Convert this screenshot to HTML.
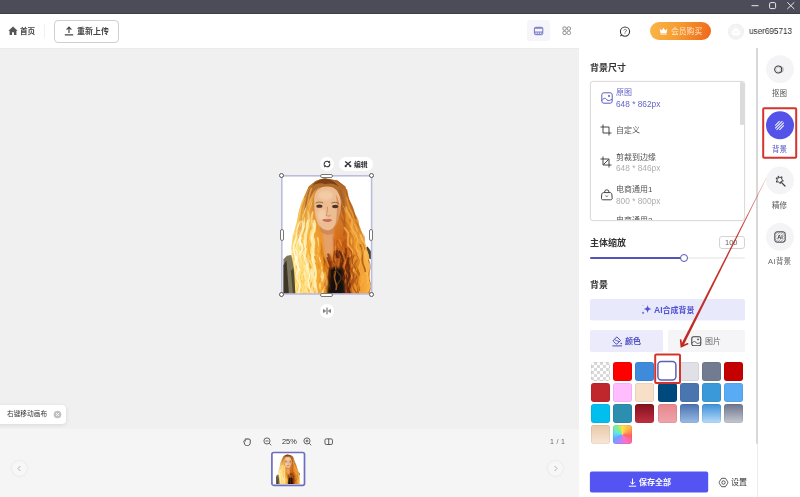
<!DOCTYPE html>
<html lang="zh-CN">
<head>
<meta charset="utf-8">
<title>背景</title>
<style>
*{box-sizing:border-box;margin:0;padding:0}
html,body{width:800px;height:497px;overflow:hidden;background:#fff}
body{position:relative;font-family:"Liberation Sans","Noto Sans CJK SC",sans-serif;font-size:8px;color:#333;line-height:1}
.abs{position:absolute}
.t{position:absolute;white-space:nowrap;line-height:1;will-change:transform}
#titlebar{left:0;top:0;width:800px;height:15px;background:linear-gradient(#4c4c58 0,#4c4c58 13px,#3d3d45 13px,#3d3d45 14px,#b9b9bd 14px)}
#header{left:0;top:14px;width:800px;height:34px;background:#fff}
#canvas{left:0;top:48px;width:579px;height:380px;background:#f0f0f0;border-top:1px solid #ebebeb}
#bottom{left:0;top:428px;width:579px;height:69px;background:#f5f5f5;border-top:1px solid #f1f1f1}
#panel{left:579px;top:48px;width:178px;height:449px;background:#fff}
#side{left:757px;top:48px;width:43px;height:449px;background:#fff;border-left:1px solid #ececec}
.b{font-weight:bold}
#sw i{position:absolute;display:block;width:18.6px;height:18.6px;border-radius:3px;box-shadow:inset 0 0 0 .6px rgba(0,0,0,.1)}
.hc{position:absolute;width:5.4px;height:5.4px;border-radius:50%;background:#fff;border:.9px solid #555}
.hh{position:absolute;width:12.6px;height:4px;border-radius:2px;background:#fff;border:.8px solid #777}
.hv{position:absolute;width:4px;height:12px;border-radius:2px;background:#fff;border:.8px solid #777}
.n{font-size:8.3px}
</style>
</head>
<body>
<svg width="0" height="0" style="position:absolute">
<defs>
<filter id="bl1" x="-20%" y="-20%" width="140%" height="140%"><feGaussianBlur stdDeviation="1.2"/></filter>
<filter id="bl2" x="-20%" y="-20%" width="140%" height="140%"><feGaussianBlur stdDeviation="2.2"/></filter>
<filter id="bl3" x="-20%" y="-20%" width="140%" height="140%"><feGaussianBlur stdDeviation="0.6"/></filter>
<linearGradient id="hairg" gradientUnits="userSpaceOnUse" x1="6" y1="0" x2="88" y2="0"><stop offset="0" stop-color="#ffe074"/><stop offset="0.2" stop-color="#ffc448"/><stop offset="0.4" stop-color="#f29a24"/><stop offset="0.55" stop-color="#da6e14"/><stop offset="0.7" stop-color="#ca5e12"/><stop offset="0.85" stop-color="#f09828"/><stop offset="1" stop-color="#f8b040"/></linearGradient>
<linearGradient id="hairv" gradientUnits="userSpaceOnUse" x1="0" y1="3" x2="0" y2="70"><stop offset="0" stop-color="#9a5a22" stop-opacity=".95"/><stop offset="0.25" stop-color="#c47a30" stop-opacity=".8"/><stop offset="0.7" stop-color="#d88a34" stop-opacity=".45"/><stop offset="1" stop-color="#e09038" stop-opacity="0"/></linearGradient>
<symbol id="photo" viewBox="0 0 90 119" preserveAspectRatio="none">
<rect width="90" height="119" fill="#fff"/>
<g filter="url(#bl3)">
<path d="M1.5 84L5 80.5L14 79L20 119H1.5Z" fill="#7c765c"/>
<path d="M1.5 90L4.5 85L7 119H1.5Z" fill="#3c3628"/>
<path d="M9 96L13 90L17 119H11Z" fill="#4e4836"/>
<path d="M90 76L86.5 71L82 74L85 82L90 84Z" fill="#4a4434"/>
<path d="M13.5 119.0L12.5 100.0L11.5 90.0L9.5 80.0L10.0 70.0L11.5 59.0L15.0 48.0L17.0 36.0L21.5 23.0L27.0 10.5L34.0 5.0L40.0 3.0L43.0 2.6L46.0 3.0L56.0 4.5L64.0 10.5L67.5 23.0L72.5 36.0L77.5 48.0L81.5 59.0L84.5 70.0L88.0 80.0L89.0 100.0L89.0 119.0Z" fill="url(#hairg)"/>
<path d="M13.5 119.0L12.5 100.0L11.5 90.0L9.5 80.0L10.0 70.0L11.5 59.0L15.0 48.0L17.0 36.0L21.5 23.0L27.0 10.5L34.0 5.0L40.0 3.0L43.0 2.6L46.0 3.0L56.0 4.5L64.0 10.5L67.5 23.0L72.5 36.0L77.5 48.0L81.5 59.0L84.5 70.0L88.0 80.0L89.0 100.0L89.0 119.0Z" fill="url(#hairv)"/>
</g>
<g filter="url(#bl3)" fill="none" stroke-linecap="round">
<path d="M45.8 77.2L46.4 80.3L45.8 83.3L44.7 86.4L44.7 89.4L45.9 92.5L47.7 95.5L48.7 98.6L48.1 101.6L46.5 104.7" stroke="#a95314" stroke-width="0.9" opacity="0.67"/>
<path d="M17.3 78.1L17.3 82.7L17.4 87.2L18.0 91.8L19.2 96.3L20.2 100.8L20.1 105.4L19.5 109.9L19.3 114.5L20.2 119.0" stroke="#edab44" stroke-width="1.0" opacity="0.56"/>
<path d="M49.3 69.4L49.0 71.1L48.8 72.7L48.9 74.3L49.1 76.0L49.7 77.6L50.4 79.2L51.2 80.9L51.9 82.5L52.6 84.1" stroke="#ab5012" stroke-width="1.5" opacity="0.81"/>
<path d="M47.6 95.7L49.2 98.2L49.1 100.8L47.6 103.4L45.9 106.0L45.8 108.6L47.4 111.2L49.4 113.8L50.1 116.4L49.0 119.0" stroke="#f09f38" stroke-width="1.9" opacity="0.71"/>
<path d="M65.9 38.9L65.6 44.5L68.8 50.1L71.0 55.8L69.7 61.4L73.0 67.1L74.9 72.7L73.6 78.3L77.2 84.0L77.6 89.6" stroke="#ef9727" stroke-width="1.5" opacity="0.94"/>
<path d="M42.0 88.1L42.7 90.4L43.1 92.8L43.2 95.1L43.1 97.5L42.8 99.8L42.4 102.2L42.2 104.5L42.3 106.9L42.7 109.2" stroke="#f29b24" stroke-width="1.0" opacity="0.65"/>
<path d="M32.7 8.6L29.9 13.6L27.7 18.6L25.6 23.6L24.8 28.6L23.7 33.6L22.0 38.6L21.4 43.7L21.6 48.7L20.2 53.7" stroke="#fce7ac" stroke-width="1.0" opacity="0.81"/>
<path d="M22.4 42.0L22.5 44.8L22.8 47.6L22.5 50.3L21.7 53.1L20.5 55.8L19.3 58.6L18.6 61.3L18.5 64.1L18.8 66.9" stroke="#ffefb6" stroke-width="1.1" opacity="0.71"/>
<path d="M71.0 62.6L72.9 64.9L74.7 67.2L75.3 69.5L74.9 71.8L73.9 74.2L73.6 76.5L74.5 78.8L76.5 81.1L78.3 83.5" stroke="#f09929" stroke-width="1.3" opacity="0.67"/>
<path d="M29.7 11.4L27.9 15.5L25.7 19.7L24.4 23.9L23.8 28.1L22.5 32.3L20.6 36.5L20.0 40.7L20.3 44.9L19.9 49.0" stroke="#e59a39" stroke-width="1.5" opacity="0.78"/>
<path d="M60.8 20.0L62.0 22.5L62.9 25.0L63.0 27.6L62.8 30.1L63.0 32.6L64.1 35.1L66.0 37.7L67.7 40.2L68.5 42.7" stroke="#eeae53" stroke-width="2.1" opacity="0.63"/>
<path d="M83.2 84.9L85.1 88.7L86.0 92.5L84.4 96.2L83.9 100.0L86.0 103.8L86.5 107.6L84.3 111.4L83.9 115.2L86.2 119.0" stroke="#f5a838" stroke-width="1.1" opacity="0.83"/>
<path d="M28.9 79.4L30.7 83.7L32.0 87.9L31.7 92.2L30.8 96.4L31.3 100.6L32.8 104.9L33.8 109.1L33.0 113.4L31.7 117.6" stroke="#fdd885" stroke-width="1.6" opacity="0.89"/>
<path d="M55.3 68.1L56.1 69.7L56.8 71.3L57.2 72.9L57.3 74.5L57.0 76.1L56.7 77.7L56.6 79.3L56.9 80.9L57.5 82.5" stroke="#e7943c" stroke-width="1.6" opacity="0.60"/>
<path d="M38.2 85.7L40.5 89.4L41.3 93.1L40.0 96.8L38.5 100.5L38.9 104.2L41.0 107.9L42.6 111.6L41.8 115.3L39.6 119.0" stroke="#f9c56d" stroke-width="0.8" opacity="0.91"/>
<path d="M63.9 92.3L64.4 94.4L65.4 96.4L66.5 98.4L67.5 100.4L68.0 102.4L67.9 104.4L67.2 106.5L66.1 108.5L65.1 110.5" stroke="#efab52" stroke-width="0.9" opacity="0.77"/>
<path d="M67.9 86.5L66.8 90.1L66.7 93.8L68.3 97.4L70.2 101.0L71.0 104.6L69.9 108.2L68.0 111.8L66.9 115.4L67.7 119.0" stroke="#a54c13" stroke-width="2.1" opacity="0.90"/>
<path d="M40.5 76.4L43.1 81.1L44.3 85.8L42.7 90.6L42.8 95.3L45.6 100.0L45.8 104.8L43.3 109.5L43.8 114.3L46.7 119.0" stroke="#b35e17" stroke-width="0.9" opacity="0.81"/>
<path d="M87.3 84.6L88.8 88.5L89.3 92.3L88.2 96.1L87.2 99.9L87.6 103.7L89.2 107.5L90.0 111.4L88.9 115.2L87.2 119.0" stroke="#aa5b1d" stroke-width="0.9" opacity="0.85"/>
<path d="M12.9 58.8L12.8 62.6L13.3 66.4L13.0 70.2L11.9 74.0L11.0 77.8L11.7 81.6L13.5 85.4L14.6 89.1L14.0 92.9" stroke="#e9a440" stroke-width="1.2" opacity="0.55"/>
<path d="M32.8 65.9L33.2 68.6L33.2 71.4L32.9 74.1L32.5 76.8L32.3 79.5L32.8 82.2L33.8 84.9L34.9 87.7L35.6 90.4" stroke="#e89933" stroke-width="1.3" opacity="0.82"/>
<path d="M29.0 43.0L27.2 48.0L25.0 53.1L26.2 58.1L26.5 63.2L23.6 68.2L23.8 73.3L26.8 78.3L26.2 83.4L24.4 88.4" stroke="#f2ad3e" stroke-width="1.0" opacity="0.75"/>
<path d="M77.1 81.8L74.4 85.9L74.2 90.0L77.7 94.2L78.2 98.3L74.8 102.4L74.9 106.6L78.6 110.7L78.3 114.9L74.4 119.0" stroke="#c36c1c" stroke-width="1.1" opacity="0.72"/>
<path d="M60.9 90.2L60.9 93.4L59.3 96.6L59.0 99.8L60.7 103.0L62.1 106.2L60.9 109.4L59.1 112.6L59.7 115.8L61.9 119.0" stroke="#d26613" stroke-width="0.9" opacity="0.83"/>
<path d="M50.6 61.7L51.0 63.6L51.6 65.6L52.4 67.5L53.2 69.5L53.9 71.4L54.3 73.4L54.4 75.3L54.1 77.3L53.8 79.2" stroke="#e68e34" stroke-width="0.9" opacity="0.80"/>
<path d="M41.7 61.5L43.8 65.9L44.9 70.4L43.9 74.9L42.7 79.3L44.2 83.8L47.1 88.3L47.7 92.7L45.7 97.2L44.5 101.7" stroke="#f5ab46" stroke-width="1.1" opacity="0.55"/>
<path d="M44.6 69.3L44.5 71.9L45.1 74.5L46.0 77.2L47.1 79.8L47.9 82.4L48.1 85.0L47.7 87.7L47.3 90.3L47.0 92.9" stroke="#af5715" stroke-width="1.9" opacity="0.71"/>
<path d="M74.4 87.1L73.8 89.4L72.0 91.6L70.6 93.9L70.8 96.2L72.6 98.5L74.7 100.7L75.5 103.0L74.6 105.3L72.4 107.5" stroke="#ad5616" stroke-width="2.1" opacity="0.70"/>
<path d="M54.3 84.6L53.0 88.4L54.1 92.2L56.9 96.1L58.4 99.9L56.9 103.7L54.3 107.5L53.9 111.4L56.4 115.2L59.0 119.0" stroke="#efa549" stroke-width="1.9" opacity="0.81"/>
<path d="M68.6 95.1L68.6 97.8L67.4 100.4L66.1 103.1L65.8 105.7L67.0 108.4L68.6 111.0L69.4 113.7L68.7 116.3L67.1 119.0" stroke="#ce6515" stroke-width="2.0" opacity="0.69"/>
<path d="M21.0 43.9L18.9 48.0L19.2 52.0L19.4 56.1L16.6 60.2L15.5 64.2L17.3 68.3L17.2 72.3L14.6 76.4L15.4 80.5" stroke="#ffd462" stroke-width="0.9" opacity="0.87"/>
<path d="M26.7 34.1L26.8 39.1L26.4 44.0L25.1 49.0L24.3 54.0L24.2 59.0L23.6 64.0L22.3 68.9L22.7 73.9L23.8 78.9" stroke="#fdc44d" stroke-width="2.0" opacity="0.83"/>
<path d="M73.8 48.7L76.2 54.3L78.5 59.9L79.1 65.5L80.3 71.1L83.2 76.7L84.2 82.3L83.5 87.9L84.5 93.5L85.6 99.1" stroke="#fbbd58" stroke-width="1.7" opacity="0.76"/>
<path d="M70.4 55.0L71.1 58.1L71.1 61.2L71.0 64.4L71.3 67.5L72.4 70.7L74.1 73.8L75.8 76.9L76.8 80.1L76.5 83.2" stroke="#f9b954" stroke-width="2.2" opacity="0.76"/>
<path d="M54.2 78.5L55.2 81.9L55.6 85.2L55.4 88.5L55.1 91.9L55.4 95.2L56.3 98.6L57.1 101.9L57.0 105.2L56.3 108.6" stroke="#a34911" stroke-width="1.6" opacity="0.75"/>
<path d="M64.6 75.4L64.3 79.8L62.3 84.2L63.4 88.5L66.6 92.9L66.9 97.3L64.0 101.7L63.3 106.1L66.5 110.5L68.1 114.8" stroke="#e4933e" stroke-width="1.9" opacity="0.91"/>
<path d="M47.8 82.5L47.1 86.6L47.9 90.6L49.4 94.7L48.9 98.7L48.1 102.8L49.4 106.8L50.2 110.9L48.8 114.9L48.7 119.0" stroke="#f0a03c" stroke-width="1.8" opacity="0.68"/>
<path d="M38.2 86.4L37.5 88.3L37.4 90.3L37.9 92.2L39.0 94.1L40.3 96.0L41.1 97.9L41.1 99.8L40.3 101.7L39.1 103.6" stroke="#bf6d1d" stroke-width="1.3" opacity="0.72"/>
<path d="M50.7 83.0L52.6 86.4L53.8 89.8L53.2 93.3L51.9 96.7L51.4 100.2L52.3 103.6L54.1 107.0L55.0 110.5L54.1 113.9" stroke="#dd7416" stroke-width="1.1" opacity="0.85"/>
<path d="M74.6 86.8L74.9 89.9L73.9 93.1L73.1 96.2L73.8 99.4L75.3 102.5L75.8 105.7L74.8 108.9L73.4 112.0L73.6 115.2" stroke="#e68922" stroke-width="2.0" opacity="0.60"/>
<path d="M27.4 70.4L27.3 73.4L27.9 76.3L28.7 79.2L29.4 82.2L29.5 85.1L29.3 88.0L29.2 91.0L29.7 93.9L30.8 96.9" stroke="#fcbc41" stroke-width="1.0" opacity="0.71"/>
<path d="M63.9 84.7L62.1 88.6L62.8 92.4L65.7 96.2L67.3 100.0L65.5 103.8L62.8 107.6L63.1 111.4L66.1 115.2L68.0 119.0" stroke="#cc6012" stroke-width="1.5" opacity="0.82"/>
<path d="M34.8 9.5L33.8 11.9L33.1 14.2L32.3 16.6L31.4 18.9L30.5 21.3L29.8 23.6L29.4 26.0L29.1 28.3L28.9 30.6" stroke="#d89039" stroke-width="1.1" opacity="0.63"/>
<path d="M76.8 94.9L77.4 97.6L77.6 100.3L77.3 102.9L76.7 105.6L76.2 108.3L75.9 111.0L76.2 113.6L76.7 116.3L77.4 119.0" stroke="#ab5717" stroke-width="1.3" opacity="0.74"/>
<path d="M48.4 61.5L46.9 65.1L46.8 68.7L48.9 72.3L51.1 76.0L51.0 79.6L49.3 83.2L48.8 86.8L50.8 90.5L53.3 94.1" stroke="#e07818" stroke-width="1.4" opacity="0.63"/>
<path d="M26.1 50.6L25.8 52.6L25.1 54.6L24.0 56.5L22.7 58.5L21.7 60.5L21.2 62.5L21.2 64.5L21.7 66.5L22.6 68.5" stroke="#fec850" stroke-width="1.7" opacity="0.71"/>
<path d="M55.5 89.0L56.4 91.3L57.9 93.6L59.4 95.9L60.5 98.3L60.6 100.6L59.6 102.9L58.2 105.2L56.8 107.5L56.1 109.8" stroke="#d56913" stroke-width="1.4" opacity="0.91"/>
<path d="M74.5 67.5L74.6 72.4L77.8 77.3L80.5 82.2L79.5 87.1L77.6 92.0L78.6 96.9L81.5 101.8L81.4 106.7L78.6 111.6" stroke="#f8b249" stroke-width="1.5" opacity="0.55"/>
<path d="M36.0 62.3L37.0 66.6L37.3 71.0L36.8 75.3L36.5 79.7L37.7 84.0L39.5 88.3L39.9 92.7L39.0 97.0L38.7 101.4" stroke="#fce09e" stroke-width="1.6" opacity="0.76"/>
<path d="M40.1 95.8L40.7 98.4L42.0 100.9L43.4 103.5L44.4 106.1L44.6 108.7L43.9 111.3L42.6 113.8L41.3 116.4L40.7 119.0" stroke="#fbdc99" stroke-width="1.8" opacity="0.65"/>
<path d="M39.7 74.1L39.6 75.9L39.9 77.8L40.5 79.6L41.3 81.4L42.1 83.3L42.7 85.1L43.0 86.9L42.9 88.8L42.6 90.6" stroke="#a24f14" stroke-width="1.6" opacity="0.95"/>
<path d="M59.1 78.1L60.8 80.4L61.3 82.6L60.7 84.8L59.5 87.0L58.9 89.3L59.6 91.5L61.2 93.7L62.6 95.9L62.7 98.2" stroke="#d16513" stroke-width="1.0" opacity="0.74"/>
<path d="M25.1 49.0L24.0 53.3L23.8 57.6L23.7 61.9L22.8 66.2L22.0 70.5L22.6 74.8L23.4 79.1L23.6 83.4L23.5 87.7" stroke="#eea83e" stroke-width="1.3" opacity="0.66"/>
<path d="M61.6 85.9L62.3 88.4L62.6 90.8L62.2 93.2L61.8 95.6L61.9 98.1L62.5 100.5L63.2 102.9L63.4 105.3L62.9 107.8" stroke="#eca24a" stroke-width="1.3" opacity="0.91"/>
<path d="M53.2 7.7L54.3 13.4L55.0 19.2L57.1 24.9L58.2 30.7L57.7 36.4L59.3 42.2L62.9 48.0L63.9 53.7L62.7 59.5" stroke="#ac581c" stroke-width="2.2" opacity="0.65"/>
<path d="M51.8 90.0L53.2 93.2L53.7 96.4L53.2 99.7L51.9 102.9L51.1 106.1L51.5 109.3L52.9 112.6L54.3 115.8L54.7 119.0" stroke="#c16114" stroke-width="1.7" opacity="0.73"/>
<path d="M36.3 7.8L34.2 11.8L33.3 15.8L32.1 19.8L30.5 23.7L29.5 27.7L29.0 31.7L28.7 35.7L28.6 39.6L27.9 43.6" stroke="#e59d3d" stroke-width="1.6" opacity="0.72"/>
<path d="M63.2 52.3L67.3 58.0L66.5 63.8L66.6 69.6L71.3 75.4L69.8 81.2L70.0 87.0L73.9 92.8L70.5 98.6L71.2 104.4" stroke="#f4b152" stroke-width="1.9" opacity="0.80"/>
<path d="M36.3 80.7L37.3 84.0L39.7 87.3L40.8 90.6L39.5 93.9L38.0 97.2L38.9 100.5L41.3 103.8L42.0 107.1L40.2 110.4" stroke="#feedb7" stroke-width="2.1" opacity="0.90"/>
<path d="M31.0 8.6L28.3 11.6L26.6 14.6L25.0 17.6L24.1 20.6L23.6 23.5L22.8 26.5L21.1 29.5L19.6 32.5L19.0 35.5" stroke="#df993d" stroke-width="0.9" opacity="0.82"/>
<path d="M49.3 61.6L49.7 64.9L51.2 68.3L52.5 71.7L52.5 75.1L51.6 78.4L51.7 81.8L53.3 85.2L55.0 88.6L55.1 92.0" stroke="#da6e14" stroke-width="2.0" opacity="0.58"/>
<path d="M19.8 78.1L17.9 82.4L18.8 86.8L22.1 91.1L22.9 95.5L20.7 99.8L19.9 104.2L22.7 108.5L24.5 112.9L22.3 117.2" stroke="#ffeeb3" stroke-width="1.3" opacity="0.81"/>
<path d="M69.9 33.2L71.9 37.3L74.9 41.3L76.7 45.4L76.8 49.4L77.5 53.5L80.3 57.5L82.9 61.6L83.1 65.6L82.3 69.7" stroke="#cb7d2b" stroke-width="2.0" opacity="0.58"/>
<path d="M17.1 55.4L17.2 59.2L18.1 63.0L17.8 66.8L16.1 70.6L14.7 74.4L14.8 78.2L16.7 82.0L18.7 85.8L19.1 89.6" stroke="#ffe596" stroke-width="1.7" opacity="0.58"/>
<path d="M33.0 70.3L33.9 74.9L32.9 79.5L33.1 84.1L35.3 88.7L36.1 93.4L34.9 98.0L34.9 102.6L36.8 107.2L37.1 111.8" stroke="#f8ae35" stroke-width="1.3" opacity="0.60"/>
<path d="M67.6 93.7L67.8 96.5L66.8 99.3L65.5 102.1L65.4 104.9L66.7 107.8L68.2 110.6L68.5 113.4L67.4 116.2L65.9 119.0" stroke="#e3933d" stroke-width="2.1" opacity="0.91"/>
<path d="M31.2 36.6L30.3 39.9L29.9 43.3L30.3 46.6L30.8 50.0L30.5 53.3L29.2 56.6L28.0 60.0L28.0 63.3L28.9 66.7" stroke="#fce19d" stroke-width="1.9" opacity="0.77"/>
<path d="M69.8 55.2L71.2 57.8L71.3 60.5L70.5 63.1L70.0 65.7L70.7 68.3L72.6 70.9L74.7 73.5L75.7 76.2L75.3 78.8" stroke="#f6b04a" stroke-width="1.6" opacity="0.78"/>
<path d="M80.6 63.4L81.1 68.5L82.7 73.5L85.3 78.6L86.2 83.6L85.6 88.6L85.4 93.7L86.4 98.7L87.3 103.8L86.6 108.8" stroke="#f9b64c" stroke-width="1.8" opacity="0.91"/>
<path d="M18.5 61.8L17.2 64.3L15.7 66.8L14.8 69.3L15.4 71.8L16.8 74.3L17.8 76.8L17.6 79.3L16.5 81.8L15.5 84.3" stroke="#ffefb2" stroke-width="1.5" opacity="0.86"/>
<path d="M39.8 84.4L40.1 87.4L41.5 90.4L43.1 93.4L44.0 96.4L43.8 99.4L42.5 102.5L41.4 105.5L41.3 108.5L42.4 111.5" stroke="#f29b25" stroke-width="1.4" opacity="0.88"/>
<path d="M63.6 82.2L62.2 86.3L61.0 90.4L61.6 94.5L63.9 98.6L65.7 102.6L65.2 106.7L62.9 110.8L61.4 114.9L62.3 119.0" stroke="#a94c11" stroke-width="1.8" opacity="0.87"/>
<path d="M44.0 86.8L43.0 90.4L43.3 94.0L45.3 97.5L46.1 101.1L44.7 104.7L43.6 108.3L44.7 111.8L46.6 115.4L46.3 119.0" stroke="#c36c1a" stroke-width="2.2" opacity="0.57"/>
<path d="M34.3 88.0L34.9 90.1L35.6 92.2L36.2 94.2L36.6 96.3L36.6 98.4L36.4 100.5L35.9 102.6L35.6 104.6L35.5 106.7" stroke="#f8ad34" stroke-width="0.9" opacity="0.59"/>
<path d="M29.9 23.2L30.1 26.0L29.6 28.9L28.2 31.7L26.7 34.5L26.3 37.4L27.1 40.2L27.8 43.1L27.6 45.9L26.2 48.8" stroke="#f9d78e" stroke-width="1.0" opacity="0.85"/>
<path d="M35.7 77.7L35.0 80.0L33.9 82.3L32.9 84.6L33.1 87.0L34.5 89.3L36.4 91.6L37.9 93.9L38.1 96.2L36.9 98.6" stroke="#e79832" stroke-width="1.5" opacity="0.64"/>
<path d="M16.6 90.9L16.8 94.0L15.9 97.2L15.1 100.3L15.2 103.4L16.6 106.5L18.0 109.6L18.3 112.8L17.3 115.9L16.1 119.0" stroke="#fff3be" stroke-width="1.7" opacity="0.65"/>
<path d="M16.0 46.9L16.2 50.2L15.1 53.6L12.8 57.0L10.7 60.3L10.3 63.7L11.3 67.1L12.3 70.5L12.1 73.8L10.4 77.2" stroke="#ffe99b" stroke-width="1.3" opacity="0.65"/>
<path d="M68.9 50.9L72.1 55.3L74.1 59.7L73.2 64.1L72.5 68.5L75.3 72.9L78.9 77.3L78.9 81.7L76.4 86.1L76.7 90.5" stroke="#fab954" stroke-width="0.8" opacity="0.88"/>
<path d="M74.9 79.3L76.0 81.5L77.0 83.8L77.4 86.0L77.0 88.3L76.2 90.6L75.7 92.8L76.1 95.1L77.2 97.3L78.2 99.6" stroke="#ba651b" stroke-width="2.1" opacity="0.78"/>
<path d="M63.0 31.2L65.4 36.2L65.9 41.1L67.5 46.1L70.3 51.1L70.4 56.1L71.3 61.1L74.1 66.1L73.9 71.1L74.7 76.0" stroke="#e9942a" stroke-width="1.1" opacity="0.77"/>
<path d="M49.8 71.8L50.5 74.3L50.8 76.8L50.8 79.2L50.5 81.7L50.6 84.2L51.0 86.6L51.8 89.1L52.6 91.6L53.1 94.0" stroke="#de7517" stroke-width="1.3" opacity="0.82"/>
<path d="M21.2 39.6L21.4 43.3L22.5 47.0L22.5 50.7L20.6 54.5L17.9 58.2L17.0 61.9L18.1 65.6L19.5 69.3L19.5 73.1" stroke="#fee59b" stroke-width="1.8" opacity="0.64"/>
<path d="M56.1 95.5L56.5 98.1L56.1 100.7L55.2 103.3L54.7 105.9L55.1 108.6L56.2 111.2L57.1 113.8L57.0 116.4L56.2 119.0" stroke="#ad5012" stroke-width="1.2" opacity="0.68"/>
<path d="M39.5 64.9L38.9 67.8L38.5 70.7L39.1 73.6L40.2 76.6L41.1 79.5L41.2 82.4L40.7 85.3L40.5 88.3L41.2 91.2" stroke="#f39c25" stroke-width="1.6" opacity="0.84"/>
<path d="M35.0 79.7L35.8 82.0L36.7 84.3L37.3 86.6L37.7 88.9L37.5 91.2L37.1 93.5L36.8 95.8L36.8 98.1L37.2 100.3" stroke="#f6a830" stroke-width="1.1" opacity="0.71"/>
<path d="M69.2 58.0L70.3 60.3L71.4 62.6L72.1 64.9L72.1 67.1L71.8 69.4L72.0 71.7L72.8 74.0L74.2 76.3L75.6 78.5" stroke="#cc751f" stroke-width="2.1" opacity="0.72"/>
<path d="M47.1 63.1L49.6 68.0L48.5 72.9L47.5 77.8L50.6 82.7L52.3 87.6L49.8 92.5L50.0 97.4L53.6 102.3L52.7 107.2" stroke="#c66616" stroke-width="1.4" opacity="0.83"/>
<path d="M86.6 76.3L85.9 80.8L85.5 85.3L88.0 89.7L88.8 94.2L86.6 98.7L86.1 103.2L88.8 107.7L89.2 112.2L86.4 116.7" stroke="#fbbe58" stroke-width="0.9" opacity="0.70"/>
<path d="M47.8 76.2L48.4 80.9L50.9 85.7L52.4 90.5L51.1 95.2L49.7 100.0L50.9 104.7L53.3 109.5L53.3 114.2L50.9 119.0" stroke="#e17a18" stroke-width="1.6" opacity="0.69"/>
<path d="M48.9 95.3L48.8 98.0L50.4 100.6L52.3 103.2L52.9 105.9L51.7 108.5L49.7 111.1L49.0 113.7L50.2 116.4L52.5 119.0" stroke="#e27d19" stroke-width="1.7" opacity="0.63"/>
<path d="M25.0 25.7L22.8 29.9L21.2 34.0L21.1 38.2L21.7 42.3L21.5 46.5L19.6 50.7L17.3 54.8L16.2 59.0L17.1 63.2" stroke="#eca944" stroke-width="1.0" opacity="0.94"/>
<path d="M20.1 86.9L20.8 90.5L23.0 94.0L24.3 97.6L23.0 101.2L21.4 104.7L22.3 108.3L24.7 111.9L25.3 115.4L23.3 119.0" stroke="#ffcd56" stroke-width="2.2" opacity="0.88"/>
<path d="M54.1 71.0L55.3 75.2L57.2 79.5L58.1 83.7L57.8 87.9L57.1 92.1L57.4 96.3L58.8 100.5L59.8 104.7L59.4 108.9" stroke="#eb9c42" stroke-width="0.9" opacity="0.56"/>
<path d="M24.1 94.6L25.4 97.3L27.1 100.0L28.2 102.7L28.2 105.4L27.1 108.2L25.7 110.9L24.8 113.6L25.3 116.3L26.8 119.0" stroke="#ffc74c" stroke-width="1.3" opacity="0.79"/>
<path d="M52.3 4.5L53.9 7.2L55.8 9.9L56.6 12.6L57.4 15.3L58.2 18.0L58.8 20.7L58.9 23.5L58.9 26.2L59.2 28.9" stroke="#a6591f" stroke-width="1.5" opacity="0.66"/>
<path d="M51.7 62.3L52.6 65.9L52.8 69.4L52.6 72.9L52.7 76.5L53.6 80.0L54.9 83.5L55.8 87.1L55.7 90.6L55.0 94.1" stroke="#b25312" stroke-width="1.7" opacity="0.83"/>
<path d="M67.6 72.8L70.1 76.6L70.6 80.4L68.9 84.2L67.5 88.0L68.3 91.8L70.8 95.6L72.8 99.4L72.4 103.3L69.9 107.1" stroke="#b15615" stroke-width="1.6" opacity="0.91"/>
<path d="M51.5 92.5L51.7 95.0L52.2 97.5L52.9 100.0L53.4 102.5L53.7 105.0L53.6 107.5L53.2 110.0L52.7 112.4L52.3 114.9" stroke="#de7517" stroke-width="1.6" opacity="0.85"/>
<path d="M31.6 65.3L32.3 68.2L33.7 71.1L34.1 73.9L33.1 76.8L32.1 79.7L33.0 82.6L35.0 85.4L36.1 88.3L35.3 91.2" stroke="#ec9e33" stroke-width="1.1" opacity="0.67"/>
<path d="M40.8 92.7L42.6 95.6L44.3 98.6L44.5 101.5L43.1 104.4L41.4 107.3L41.1 110.2L42.6 113.2L44.7 116.1L45.5 119.0" stroke="#f29b25" stroke-width="1.1" opacity="0.85"/>
<path d="M54.4 86.8L53.5 89.2L53.3 91.5L54.1 93.8L55.6 96.1L57.2 98.4L58.0 100.7L57.6 103.0L56.4 105.4L54.8 107.7" stroke="#d86c14" stroke-width="0.8" opacity="0.65"/>
<path d="M33.2 33.1L32.5 35.3L32.7 37.5L33.5 39.7L34.4 41.8L35.0 44.0L34.9 46.2L34.1 48.4L32.8 50.5L31.8 52.7" stroke="#e79b36" stroke-width="0.9" opacity="0.56"/>
<path d="M64.6 31.6L65.6 35.4L68.3 39.3L70.8 43.1L71.3 47.0L70.8 50.9L71.9 54.7L74.8 58.6L76.9 62.5L76.6 66.3" stroke="#f0ab49" stroke-width="2.1" opacity="0.91"/>
<path d="M23.8 80.8L24.3 84.1L25.8 87.4L27.5 90.7L28.4 94.0L28.1 97.3L27.1 100.6L26.2 103.9L26.3 107.2L27.6 110.5" stroke="#ffc549" stroke-width="1.1" opacity="0.80"/>
<path d="M25.1 84.7L25.0 86.8L25.3 88.9L26.0 91.1L26.8 93.2L27.5 95.3L27.8 97.4L27.6 99.6L27.1 101.7L26.6 103.8" stroke="#ffc54a" stroke-width="2.0" opacity="0.84"/>
<path d="M21.1 67.6L20.3 73.1L18.9 78.7L21.9 84.3L22.1 89.8L21.0 95.4L24.0 100.9L23.4 106.5L21.8 112.1L24.9 117.6" stroke="#ffecac" stroke-width="1.1" opacity="0.62"/>
<path d="M28.0 64.7L26.6 69.7L27.1 74.7L28.7 79.6L29.8 84.6L29.2 89.6L28.7 94.6L30.3 99.6L32.0 104.6L31.6 109.6" stroke="#f2ab3b" stroke-width="1.2" opacity="0.92"/>
<path d="M57.9 64.1L59.7 68.6L61.5 73.1L61.5 77.5L60.8 82.0L61.9 86.4L64.1 90.9L64.2 95.4L62.6 99.8L62.3 104.3" stroke="#e89b44" stroke-width="1.2" opacity="0.65"/>
<path d="M56.4 11.1L57.5 14.1L58.4 17.2L58.5 20.2L58.0 23.2L58.3 26.3L59.7 29.3L61.4 32.3L62.4 35.4L62.4 38.4" stroke="#b26222" stroke-width="2.1" opacity="0.95"/>
<path d="M18.2 45.8L16.0 50.7L14.0 55.5L14.0 60.3L14.1 65.2L12.2 70.0L11.3 74.9L12.5 79.7L14.2 84.5L13.6 89.4" stroke="#ffedab" stroke-width="1.7" opacity="0.69"/>
<path d="M60.8 75.7L60.2 79.6L60.2 83.5L61.8 87.5L63.6 91.4L63.7 95.3L62.4 99.3L61.3 103.2L62.2 107.1L64.1 111.0" stroke="#9b4311" stroke-width="1.0" opacity="0.86"/>
<path d="M23.3 59.4L22.3 62.3L21.6 65.1L21.5 68.0L22.1 70.8L23.1 73.6L23.6 76.5L23.4 79.3L22.9 82.2L22.5 85.0" stroke="#ffc950" stroke-width="1.1" opacity="0.75"/>
<path d="M27.9 56.8L27.1 60.7L26.4 64.6L26.0 68.4L26.5 72.3L27.2 76.1L27.4 80.0L27.5 83.9L27.5 87.7L28.2 91.6" stroke="#e99e37" stroke-width="1.1" opacity="0.61"/>
<path d="M16.0 49.0L14.0 52.7L12.6 56.3L12.4 59.9L12.9 63.5L12.8 67.1L11.7 70.7L10.4 74.3L9.8 77.9L10.7 81.6" stroke="#fff2bb" stroke-width="1.6" opacity="0.77"/>
<path d="M58.5 25.1L58.6 27.6L59.0 30.1L59.8 32.6L60.9 35.1L62.0 37.6L62.7 40.1L63.0 42.6L63.1 45.1L63.6 47.6" stroke="#ac591b" stroke-width="1.2" opacity="0.79"/>
<path d="M15.9 79.1L16.9 81.7L18.0 84.3L18.8 86.9L18.9 89.5L18.4 92.1L17.9 94.7L17.9 97.3L18.5 99.9L19.4 102.5" stroke="#ffd461" stroke-width="1.9" opacity="0.57"/>
<path d="M42.0 94.8L42.1 96.4L42.5 98.1L43.1 99.8L43.8 101.5L44.5 103.1L45.2 104.8L45.7 106.5L45.8 108.1L45.7 109.8" stroke="#f7b147" stroke-width="1.8" opacity="0.57"/>
<path d="M28.6 85.6L30.0 88.1L31.2 90.6L31.6 93.0L31.1 95.5L30.2 98.0L29.6 100.5L29.8 103.0L30.8 105.4L32.1 107.9" stroke="#fdd479" stroke-width="2.2" opacity="0.86"/>
<path d="M55.4 24.3L55.4 27.2L55.9 30.2L57.1 33.1L58.4 36.0L59.4 38.9L59.6 41.8L59.4 44.7L59.8 47.6L60.8 50.5" stroke="#d17827" stroke-width="1.3" opacity="0.68"/>
<path d="M79.7 59.7L79.9 61.8L80.8 63.9L82.2 66.0L83.5 68.0L84.2 70.1L84.3 72.2L84.0 74.3L84.1 76.4L85.1 78.5" stroke="#fcbf59" stroke-width="2.0" opacity="0.79"/>
<path d="M70.0 45.9L69.9 49.4L70.4 52.8L72.2 56.3L74.5 59.7L76.1 63.2L76.2 66.6L75.4 70.1L75.4 73.6L76.9 77.0" stroke="#f8b24a" stroke-width="1.1" opacity="0.77"/>
<path d="M29.5 21.9L28.2 24.7L27.4 27.4L27.0 30.2L27.1 32.9L26.9 35.7L26.6 38.5L25.7 41.2L24.8 44.0L24.4 46.8" stroke="#f1b24b" stroke-width="1.8" opacity="0.90"/>
<path d="M27.6 38.5L27.1 40.8L27.2 43.0L27.9 45.2L28.6 47.4L28.7 49.6L27.9 51.8L26.6 54.0L25.3 56.3L24.6 58.5" stroke="#fbd786" stroke-width="1.2" opacity="0.71"/>
<path d="M79.2 69.4L80.6 72.3L81.4 75.3L81.6 78.3L81.4 81.3L81.1 84.2L81.5 87.2L82.5 90.2L83.6 93.1L84.2 96.1" stroke="#ad5c1b" stroke-width="1.8" opacity="0.91"/>
<path d="M18.8 32.9L17.9 36.3L17.9 39.7L17.4 43.1L16.4 46.6L15.2 50.0L14.3 53.4L13.9 56.8L13.3 60.2L12.4 63.7" stroke="#f9cd64" stroke-width="1.5" opacity="0.57"/>
<path d="M38.9 66.3L39.5 69.6L40.2 72.9L40.3 76.2L40.0 79.5L40.2 82.8L41.1 86.1L42.2 89.4L42.7 92.7L42.4 96.1" stroke="#cc771d" stroke-width="1.8" opacity="0.65"/>
<path d="M63.9 64.8L64.0 67.3L63.8 69.8L63.9 72.3L64.4 74.8L65.3 77.3L66.5 79.8L67.3 82.3L67.8 84.8L67.8 87.3" stroke="#ae5113" stroke-width="2.0" opacity="0.64"/>
<path d="M33.0 35.0L32.9 37.8L33.2 40.5L33.5 43.3L33.7 46.1L33.4 48.8L32.7 51.6L32.1 54.4L31.7 57.2L31.7 59.9" stroke="#e79935" stroke-width="2.2" opacity="0.67"/>
<path d="M64.1 88.3L63.2 91.1L62.1 93.8L61.7 96.6L62.2 99.4L63.5 102.1L64.9 104.9L65.9 107.7L65.9 110.4L64.8 113.2" stroke="#cd6112" stroke-width="1.1" opacity="0.80"/>
<path d="M20.8 42.7L20.8 46.1L20.7 49.6L19.7 53.0L18.2 56.5L17.2 59.9L17.2 63.4L17.5 66.8L17.2 70.3L16.4 73.7" stroke="#f2b54b" stroke-width="1.0" opacity="0.71"/>
<path d="M44.4 69.3L44.9 71.2L45.8 73.0L46.8 74.8L47.4 76.6L47.5 78.5L47.2 80.3L46.6 82.1L46.3 83.9L46.4 85.7" stroke="#ab5414" stroke-width="1.6" opacity="0.83"/>
<path d="M17.8 39.3L17.7 42.7L16.8 46.0L15.6 49.3L14.7 52.7L14.4 56.0L13.5 59.4L12.4 62.7L11.7 66.1L11.9 69.4" stroke="#edad48" stroke-width="1.5" opacity="0.68"/>
<path d="M39.2 5.2L37.9 8.5L36.8 11.7L35.5 15.0L33.7 18.3L32.7 21.6L33.0 24.8L33.4 28.1L32.4 31.4L30.6 34.7" stroke="#d78e37" stroke-width="1.5" opacity="0.80"/>
<path d="M69.8 36.7L70.5 40.8L73.1 45.0L76.3 49.1L77.6 53.3L77.2 57.5L77.3 61.6L79.7 65.8L82.7 69.9L83.8 74.1" stroke="#bd6d23" stroke-width="1.4" opacity="0.66"/>
<path d="M76.3 84.6L73.9 88.0L73.5 91.5L76.2 94.9L78.2 98.3L76.4 101.7L73.8 105.1L74.6 108.5L77.8 111.9L78.4 115.3" stroke="#c0691b" stroke-width="1.3" opacity="0.94"/>
<path d="M28.4 20.9L27.6 23.7L27.9 26.5L27.8 29.3L26.5 32.1L24.8 34.9L24.3 37.8L25.2 40.6L25.8 43.4L25.1 46.2" stroke="#eaa33f" stroke-width="1.1" opacity="0.75"/>
<path d="M58.9 80.5L61.9 84.5L63.6 88.5L61.5 92.5L59.6 96.6L61.7 100.6L64.7 104.6L63.7 108.6L60.4 112.6L60.5 116.6" stroke="#cf6313" stroke-width="1.2" opacity="0.84"/>
<path d="M62.2 66.7L60.8 72.4L63.2 78.0L66.3 83.7L64.8 89.4L63.3 95.0L66.6 100.7L67.7 106.3L64.3 112.0L64.5 117.7" stroke="#a64911" stroke-width="1.3" opacity="0.66"/>
<path d="M62.4 52.6L62.5 55.4L63.4 58.3L64.7 61.1L65.6 64.0L65.5 66.8L65.1 69.7L65.6 72.5L67.0 75.4L68.6 78.2" stroke="#bb5d16" stroke-width="0.9" opacity="0.58"/>
<path d="M18.7 68.4L17.8 70.8L16.9 73.1L16.4 75.5L16.5 77.9L17.3 80.3L18.7 82.6L19.7 85.0L20.1 87.4L19.7 89.7" stroke="#fff0b6" stroke-width="2.0" opacity="0.57"/>
<path d="M29.8 50.1L29.7 55.1L30.2 60.1L28.7 65.1L28.1 70.1L30.1 75.2L29.8 80.2L29.0 85.2L31.4 90.2L32.6 95.2" stroke="#fbb93e" stroke-width="1.3" opacity="0.68"/>
<path d="M70.7 81.2L70.3 85.4L68.8 89.6L68.7 93.8L70.6 98.0L72.3 102.2L71.6 106.4L69.6 110.6L69.0 114.8L70.8 119.0" stroke="#a24b13" stroke-width="1.9" opacity="0.60"/>
<path d="M38.7 65.1L38.6 67.9L38.0 70.8L37.7 73.6L37.9 76.4L38.7 79.3L39.8 82.1L40.7 84.9L40.9 87.7L40.5 90.6" stroke="#f39f28" stroke-width="2.2" opacity="0.60"/>
<path d="M61.7 74.8L61.2 79.1L63.1 83.4L66.0 87.7L66.4 92.1L64.1 96.4L62.6 100.7L64.5 105.0L67.5 109.3L67.4 113.6" stroke="#db822f" stroke-width="1.2" opacity="0.84"/>
<path d="M65.0 14.1L65.7 17.4L66.3 20.6L67.2 23.8L68.6 27.0L70.2 30.2L71.5 33.4L72.5 36.6L73.5 39.8L74.6 43.0" stroke="#b26221" stroke-width="1.9" opacity="0.89"/>
<path d="M33.6 39.3L33.6 43.7L31.9 48.0L31.1 52.3L32.3 56.6L32.6 61.0L30.7 65.3L29.6 69.6L31.7 73.9L33.4 78.2" stroke="#ec9f35" stroke-width="1.9" opacity="0.61"/>
<path d="M33.1 12.9L30.6 18.5L29.4 24.0L28.5 29.6L26.3 35.1L26.7 40.7L26.3 46.2L24.5 51.7L24.7 57.3L23.5 62.8" stroke="#f7cf7e" stroke-width="1.6" opacity="0.61"/>
<path d="M59.0 77.8L59.4 80.4L58.6 83.0L58.2 85.7L58.8 88.3L60.1 90.9L61.0 93.6L60.7 96.2L59.7 98.8L59.2 101.5" stroke="#d26613" stroke-width="1.2" opacity="0.58"/>
<path d="M26.9 47.9L24.7 53.7L24.1 59.4L24.7 65.2L23.3 71.0L23.1 76.8L25.1 82.6L25.4 88.4L24.9 94.2L27.0 100.0" stroke="#eba13a" stroke-width="1.4" opacity="0.57"/>
<path d="M49.6 64.0L50.5 68.3L52.1 72.6L53.1 77.0L52.9 81.3L52.4 85.7L53.1 90.0L54.7 94.4L55.7 98.7L55.1 103.0" stroke="#da6e14" stroke-width="1.4" opacity="0.88"/>
<path d="M54.8 19.3L54.7 21.4L54.6 23.4L54.9 25.4L55.5 27.5L56.2 29.5L56.9 31.5L57.2 33.6L57.3 35.6L57.4 37.7" stroke="#a25019" stroke-width="1.2" opacity="0.76"/>
<path d="M22.1 22.5L19.9 28.1L18.4 33.8L17.4 39.4L16.0 45.1L14.4 50.7L13.2 56.4L12.3 62.0L10.9 67.6L10.1 73.3" stroke="#f9ce65" stroke-width="1.8" opacity="0.71"/>
<path d="M72.9 79.8L71.1 84.2L71.3 88.5L73.8 92.9L76.1 97.2L75.6 101.6L72.8 105.9L71.4 110.3L73.1 114.6L76.1 119.0" stroke="#ab5416" stroke-width="1.2" opacity="0.91"/>
<path d="M14.3 56.5L14.0 59.3L13.5 62.2L12.5 65.0L11.3 67.8L10.6 70.6L10.9 73.4L11.7 76.2L12.4 79.0L12.9 81.8" stroke="#ffdd6f" stroke-width="1.3" opacity="0.81"/>
<path d="M37.2 72.2L37.8 74.0L37.8 75.8L37.5 77.7L36.9 79.5L36.6 81.3L36.6 83.1L37.2 85.0L38.2 86.8L39.2 88.6" stroke="#f5a42c" stroke-width="1.6" opacity="0.82"/>
<path d="M33.3 12.8L32.1 15.3L30.9 17.8L30.0 20.3L29.7 22.8L29.7 25.3L29.1 27.7L28.1 30.2L27.0 32.7L26.5 35.2" stroke="#e2993b" stroke-width="1.3" opacity="0.76"/>
<path d="M65.5 22.0L66.8 27.3L68.2 32.7L71.3 38.0L72.5 43.3L74.2 48.7L77.3 54.0L77.9 59.4L79.1 64.7L81.9 70.0" stroke="#e49634" stroke-width="1.4" opacity="0.94"/>
<path d="M29.5 40.9L29.0 45.5L27.8 50.2L27.1 54.9L27.3 59.5L27.3 64.2L26.2 68.9L25.7 73.5L26.6 78.2L28.1 82.9" stroke="#fec044" stroke-width="1.3" opacity="0.62"/>
<path d="M38.9 94.8L40.4 97.3L41.5 99.8L41.6 102.3L40.7 104.8L39.4 107.4L38.4 109.9L38.3 112.4L39.4 114.9L41.0 117.4" stroke="#fcde9a" stroke-width="2.0" opacity="0.89"/>
<path d="M55.7 65.0L55.2 69.0L56.9 73.0L59.4 77.1L60.4 81.1L59.2 85.1L58.1 89.1L59.1 93.2L61.5 97.2L62.5 101.2" stroke="#b05012" stroke-width="1.1" opacity="0.79"/>
<path d="M55.8 82.8L56.7 85.7L56.7 88.6L55.9 91.4L54.9 94.3L54.4 97.2L54.9 100.1L56.1 102.9L57.5 105.8L58.3 108.7" stroke="#eb9b40" stroke-width="2.2" opacity="0.85"/>
<path d="M34.0 71.4L32.7 76.7L34.9 82.0L35.8 87.2L34.5 92.5L37.0 97.8L37.2 103.1L35.2 108.4L37.8 113.7L37.8 119.0" stroke="#f8ac34" stroke-width="1.5" opacity="0.64"/>
<path d="M71.7 63.2L73.8 68.8L72.6 74.4L74.4 79.9L77.7 85.5L76.5 91.0L74.5 96.6L77.5 102.2L78.8 107.7L75.2 113.3" stroke="#ee9427" stroke-width="0.9" opacity="0.90"/>
<path d="M63.0 76.8L63.8 79.9L66.0 83.1L67.9 86.2L67.6 89.3L65.5 92.5L64.5 95.6L66.0 98.8L68.5 101.9L69.2 105.0" stroke="#b75513" stroke-width="1.6" opacity="0.86"/>
<path d="M49.3 90.8L50.8 93.9L51.4 97.0L50.9 100.2L49.5 103.3L48.5 106.4L48.8 109.6L50.2 112.7L51.8 115.9L52.5 119.0" stroke="#efa13f" stroke-width="0.9" opacity="0.56"/>
<path d="M36.3 83.3L37.5 87.2L39.0 91.2L39.1 95.2L38.3 99.1L38.3 103.1L39.5 107.1L40.3 111.1L39.6 115.0L38.6 119.0" stroke="#f6a52e" stroke-width="1.7" opacity="0.91"/>
<path d="M19.2 94.7L18.8 97.4L17.7 100.1L16.6 102.8L16.4 105.5L17.3 108.2L18.9 110.9L20.3 113.6L20.8 116.3L20.1 119.0" stroke="#ffedad" stroke-width="1.4" opacity="0.56"/>
<path d="M34.0 70.7L34.6 74.0L36.8 77.4L37.8 80.7L36.5 84.0L35.5 87.4L37.1 90.7L39.5 94.0L39.7 97.4L37.6 100.7" stroke="#eb9c31" stroke-width="1.0" opacity="0.60"/>
<path d="M76.9 59.6L78.2 62.9L79.7 66.2L80.8 69.6L81.4 72.9L81.7 76.2L82.3 79.5L83.0 82.8L84.1 86.1L84.9 89.5" stroke="#f5a737" stroke-width="1.3" opacity="0.67"/>
</g>
<g filter="url(#bl1)">
<path d="M49 93C53 91 58 91.5 62 94L63.5 119H46Z" fill="#1c1410"/>
<path d="M40 50L52 50L52 64C52.4 74 51.6 84 50 92C46.6 88 43 80 42 70Z" fill="#e6a06a"/>
</g>
<g filter="url(#bl3)" fill="none" stroke-linecap="round">
<path d="M53.7 76.8L55.6 80.8L55.6 84.9L54.5 88.9L54.7 92.9L56.6 96.9L57.6 100.9L56.3 104.9L55.0 108.9" stroke="#bc5a1a" stroke-width="1.2" opacity="0.55"/>
<path d="M48.0 87.5L48.9 90.9L50.8 94.3L51.3 97.7L49.8 101.0L48.9 104.4L50.4 107.8L52.1 111.2L51.4 114.6" stroke="#70280a" stroke-width="2.3" opacity="0.53"/>
<path d="M59.7 79.1L60.0 82.7L59.2 86.3L59.3 89.8L60.6 93.4L61.6 96.9L61.1 100.5L60.0 104.1L60.3 107.6" stroke="#5a220c" stroke-width="1.1" opacity="0.67"/>
<path d="M51.5 85.4L52.8 89.6L54.3 93.8L54.6 98.0L53.4 102.2L52.8 106.4L53.8 110.6L55.3 114.8L55.3 119.0" stroke="#a04814" stroke-width="1.0" opacity="0.65"/>
<path d="M60.5 97.7L60.1 100.4L59.3 103.0L58.8 105.7L58.9 108.4L59.5 111.0L60.4 113.7L61.2 116.3L61.5 119.0" stroke="#e28226" stroke-width="1.1" opacity="0.76"/>
<path d="M54.8 78.7L56.1 83.1L56.6 87.6L56.2 92.1L56.2 96.5L57.3 101.0L58.0 105.5L57.5 109.9L56.7 114.4" stroke="#5a220c" stroke-width="1.5" opacity="0.86"/>
<path d="M64.6 73.3L64.9 77.3L64.2 81.3L64.5 85.3L66.4 89.3L67.5 93.3L66.6 97.3L65.3 101.3L65.9 105.4" stroke="#70280a" stroke-width="1.7" opacity="0.76"/>
<path d="M48.8 79.0L49.4 81.3L48.8 83.5L47.7 85.8L46.9 88.0L47.3 90.2L48.6 92.5L50.3 94.7L51.3 96.9" stroke="#e28226" stroke-width="2.0" opacity="0.90"/>
<path d="M47.0 86.0L48.2 89.3L49.9 92.7L51.0 96.0L51.1 99.4L50.0 102.7L48.6 106.0L48.1 109.4L49.0 112.7" stroke="#a04814" stroke-width="1.7" opacity="0.83"/>
<path d="M55.6 75.4L55.9 79.9L56.7 84.3L58.0 88.8L58.4 93.3L57.9 97.8L57.7 102.3L58.4 106.7L59.3 111.2" stroke="#5a220c" stroke-width="2.3" opacity="0.77"/>
<path d="M65.5 86.3L67.4 90.4L67.5 94.5L66.1 98.6L65.8 102.7L67.6 106.8L68.6 110.8L67.1 114.9L65.7 119.0" stroke="#70280a" stroke-width="2.3" opacity="0.86"/>
<path d="M46.2 82.8L47.9 86.5L49.5 90.2L49.6 94.0L48.5 97.7L47.5 101.4L47.9 105.2L49.5 108.9L50.9 112.6" stroke="#70280a" stroke-width="2.4" opacity="0.73"/>
<path d="M46.4 79.5L48.0 83.6L50.0 87.7L49.7 91.8L48.2 95.9L48.8 100.0L50.9 104.1L51.3 108.2L49.3 112.3" stroke="#a04814" stroke-width="1.3" opacity="0.67"/>
<path d="M46.8 78.9L48.5 82.4L49.6 85.9L49.6 89.4L48.5 92.9L47.8 96.3L48.2 99.8L49.6 103.3L51.1 106.8" stroke="#84340e" stroke-width="2.1" opacity="0.70"/>
<path d="M51.4 89.0L52.1 91.6L51.9 94.3L51.0 97.0L50.0 99.7L49.6 102.4L50.1 105.0L51.4 107.7L52.7 110.4" stroke="#84340e" stroke-width="1.6" opacity="0.50"/>
<path d="M51.8 96.3L53.1 99.2L52.9 102.0L51.6 104.8L50.1 107.7L49.8 110.5L50.9 113.3L52.7 116.2L53.9 119.0" stroke="#84340e" stroke-width="1.6" opacity="0.70"/>
<path d="M65.4 88.4L63.7 92.2L64.6 96.0L67.3 99.8L67.6 103.7L65.2 107.5L64.1 111.3L66.3 115.2L68.4 119.0" stroke="#a04814" stroke-width="1.4" opacity="0.54"/>
<path d="M65.8 82.1L64.9 85.7L64.0 89.3L64.1 92.9L65.5 96.5L67.2 100.1L67.8 103.7L67.0 107.3L65.4 110.9" stroke="#e28226" stroke-width="2.4" opacity="0.87"/>
<path d="M50.8 90.7L51.2 93.7L49.8 96.6L48.7 99.6L49.5 102.5L51.5 105.5L52.2 108.4L50.7 111.4L49.0 114.3" stroke="#bc5a1a" stroke-width="1.5" opacity="0.76"/>
<path d="M53.3 76.0L52.7 79.1L52.0 82.1L52.4 85.2L54.1 88.3L55.5 91.4L55.6 94.5L54.4 97.5L53.4 100.6" stroke="#70280a" stroke-width="1.6" opacity="0.59"/>
<path d="M49.3 83.4L50.4 86.5L50.6 89.6L49.9 92.6L49.0 95.7L48.8 98.8L49.7 101.9L51.0 105.0L52.0 108.1" stroke="#bc5a1a" stroke-width="2.0" opacity="0.65"/>
<path d="M57.7 75.6L57.4 79.8L57.4 84.0L58.5 88.1L60.1 92.3L60.7 96.5L60.0 100.7L58.9 104.8L58.8 109.0" stroke="#5a220c" stroke-width="1.5" opacity="0.62"/>
<path d="M58.4 89.7L58.2 92.8L59.1 95.9L60.6 99.0L61.6 102.0L61.5 105.1L60.4 108.2L59.2 111.3L58.8 114.4" stroke="#84340e" stroke-width="2.2" opacity="0.59"/>
<path d="M58.3 96.0L58.1 98.9L59.7 101.8L61.4 104.6L61.2 107.5L59.3 110.4L58.1 113.3L59.2 116.1L61.4 119.0" stroke="#e28226" stroke-width="2.0" opacity="0.53"/>
<path d="M68.1 96.7L68.3 99.5L67.7 102.3L66.8 105.1L66.2 107.9L66.3 110.6L67.0 113.4L68.1 116.2L68.8 119.0" stroke="#5a220c" stroke-width="1.4" opacity="0.90"/>
<path d="M57.3 84.1L57.3 86.5L57.1 88.9L56.7 91.3L56.6 93.7L56.8 96.2L57.4 98.6L58.1 101.0L58.7 103.4" stroke="#e28226" stroke-width="2.3" opacity="0.80"/>
<path d="M55.3 72.8L56.5 77.1L58.4 81.4L59.6 85.7L59.4 90.0L58.3 94.3L58.2 98.6L59.3 102.9L60.8 107.3" stroke="#84340e" stroke-width="1.2" opacity="0.53"/>
<path d="M58.2 76.7L60.9 81.0L61.7 85.4L60.1 89.8L59.6 94.1L61.9 98.5L63.4 102.9L61.6 107.3L59.9 111.6" stroke="#5a220c" stroke-width="2.0" opacity="0.83"/>
<path d="M67.0 82.9L66.2 87.4L64.6 91.9L66.1 96.5L68.5 101.0L67.4 105.5L65.0 110.0L66.3 114.5L69.0 119.0" stroke="#5a220c" stroke-width="2.3" opacity="0.72"/>
<path d="M63.2 78.7L65.3 82.1L66.3 85.5L65.3 88.9L64.2 92.2L65.2 95.6L67.2 99.0L67.3 102.4L65.4 105.7" stroke="#70280a" stroke-width="1.7" opacity="0.51"/>
<path d="M56.0 83.5L54.3 87.7L54.4 91.8L56.8 95.9L58.8 100.1L57.9 104.2L55.4 108.3L54.8 112.5L57.1 116.6" stroke="#bc5a1a" stroke-width="1.7" opacity="0.69"/>
<path d="M59.7 97.4L59.2 100.1L58.4 102.8L57.9 105.5L58.0 108.2L58.8 110.9L59.8 113.6L60.6 116.3L60.6 119.0" stroke="#5a220c" stroke-width="1.5" opacity="0.74"/>
<path d="M56.8 83.9L55.7 87.7L56.7 91.5L59.2 95.4L60.3 99.2L58.8 103.1L56.7 106.9L56.9 110.8L59.4 114.6" stroke="#bc5a1a" stroke-width="2.0" opacity="0.66"/>
<path d="M50.1 86.8L49.6 90.8L48.6 94.8L50.3 98.8L51.5 102.8L49.9 106.8L49.3 110.8L51.4 114.9L51.7 118.9" stroke="#84340e" stroke-width="2.1" opacity="0.60"/>
</g>
<g filter="url(#bl1)">
<path d="M48.5 94C52 92 57.5 92 61.5 94.5L63 119H47.5Z" fill="#120c0a" opacity=".95"/>
</g>
<g filter="url(#bl3)" fill="none" stroke-linecap="round">
<path d="M54.2 92.5L54.4 95.2L54.1 98.0L53.6 100.8L53.4 103.5L53.9 106.3L54.7 109.1L55.2 111.8L55.1 114.6" stroke="#e28226" stroke-width="0.9" opacity="0.69"/>
<path d="M53.8 98.7L53.2 100.3L52.8 101.9L52.9 103.5L53.6 105.1L54.4 106.7L55.1 108.3L55.4 109.9L55.2 111.5" stroke="#e28226" stroke-width="0.8" opacity="0.56"/>
<path d="M55.4 95.7L56.9 97.8L58.7 99.9L59.7 102.0L59.6 104.1L58.3 106.2L56.7 108.3L55.5 110.4L55.5 112.5" stroke="#a04814" stroke-width="1.1" opacity="0.59"/>
<path d="M53.0 96.2L52.7 98.5L52.6 100.9L53.0 103.2L53.7 105.5L54.3 107.9L54.7 110.2L54.6 112.5L54.0 114.9" stroke="#bc5a1a" stroke-width="1.0" opacity="0.65"/>
<path d="M63.8 98.3L62.6 100.2L61.9 102.1L62.0 104.0L63.0 105.8L64.5 107.7L65.8 109.6L66.3 111.4L65.7 113.3" stroke="#a04814" stroke-width="0.8" opacity="0.57"/>
<path d="M31.2 78.5L30.0 81.5L30.0 84.5L31.9 87.5L33.7 90.5L33.4 93.5L31.9 96.5L31.5 99.5L33.1 102.5" stroke="#fff6c8" stroke-width="1.4" opacity="0.61"/>
<path d="M25.7 89.2L25.7 91.9L24.6 94.5L23.3 97.1L22.9 99.8L23.6 102.4L25.2 105.0L26.9 107.7L27.6 110.3" stroke="#fffff0" stroke-width="2.1" opacity="0.57"/>
<path d="M26.6 80.3L26.9 84.2L29.2 88.1L31.0 91.9L30.2 95.8L28.7 99.7L29.0 103.6L31.2 107.5L32.4 111.4" stroke="#ffe280" stroke-width="1.9" opacity="0.72"/>
<path d="M22.5 79.4L22.3 82.6L21.9 85.8L22.4 89.0L23.7 92.1L24.9 95.3L24.8 98.5L23.9 101.7L23.5 104.8" stroke="#ffe280" stroke-width="2.2" opacity="0.53"/>
<path d="M24.1 73.6L21.6 78.5L24.1 83.3L25.8 88.2L23.5 93.1L26.1 97.9L27.2 102.8L24.2 107.6L27.0 112.5" stroke="#fffff0" stroke-width="2.3" opacity="0.58"/>
<path d="M19.1 62.1L18.0 64.6L18.5 67.2L19.9 69.8L20.9 72.4L20.3 75.0L18.5 77.6L17.3 80.1L18.3 82.7" stroke="#fffae0" stroke-width="1.8" opacity="0.89"/>
<path d="M26.8 88.2L26.6 92.1L28.1 95.9L30.0 99.8L30.0 103.6L28.4 107.5L27.5 111.3L28.9 115.2L30.9 119.0" stroke="#ffeea8" stroke-width="1.1" opacity="0.78"/>
<path d="M25.6 91.9L26.5 95.3L27.8 98.7L27.8 102.1L26.9 105.4L26.7 108.8L27.7 112.2L28.7 115.6L28.5 119.0" stroke="#fffae0" stroke-width="1.0" opacity="0.88"/>
<path d="M32.1 48.2L31.9 53.0L30.3 57.8L29.9 62.6L31.0 67.4L30.7 72.2L29.8 76.9L31.0 81.7L32.8 86.5" stroke="#ffeea8" stroke-width="2.4" opacity="0.88"/>
<path d="M32.3 88.4L33.4 92.2L34.2 96.1L34.1 99.9L33.5 103.7L33.4 107.5L34.3 111.4L35.2 115.2L35.1 119.0" stroke="#fffff0" stroke-width="1.9" opacity="0.75"/>
<path d="M33.5 48.1L33.2 51.8L30.8 55.5L29.8 59.2L31.7 62.8L32.6 66.5L30.6 70.2L29.4 73.9L31.5 77.6" stroke="#ffe280" stroke-width="2.3" opacity="0.51"/>
<path d="M12.6 86.9L12.4 90.9L13.6 94.9L15.6 98.9L16.3 103.0L15.3 107.0L13.9 111.0L14.1 115.0L16.0 119.0" stroke="#fff6c8" stroke-width="1.0" opacity="0.53"/>
<path d="M29.6 94.5L29.6 97.6L30.8 100.6L32.3 103.7L32.6 106.8L31.5 109.8L30.3 112.9L30.4 115.9L31.8 119.0" stroke="#fff6c8" stroke-width="2.3" opacity="0.60"/>
<path d="M14.1 62.9L12.3 67.2L11.3 71.4L12.2 75.7L13.3 80.0L13.7 84.3L12.9 88.5L13.0 92.8L14.9 97.1" stroke="#fffae0" stroke-width="1.2" opacity="0.56"/>
<path d="M16.7 68.6L15.8 73.1L16.4 77.5L17.9 81.9L18.5 86.4L17.9 90.8L17.9 95.3L19.6 99.7L20.9 104.2" stroke="#ffe280" stroke-width="1.8" opacity="0.73"/>
<path d="M26.3 44.8L25.8 47.8L25.3 50.9L25.1 54.0L24.9 57.1L24.6 60.1L24.1 63.2L23.4 66.3L22.9 69.4" stroke="#ffeea8" stroke-width="1.9" opacity="0.82"/>
<path d="M25.1 47.7L25.0 52.1L24.7 56.5L23.3 60.9L22.3 65.3L22.7 69.6L23.7 74.0L23.2 78.4L22.6 82.8" stroke="#ffeea8" stroke-width="1.5" opacity="0.64"/>
<path d="M33.7 95.3L34.3 98.3L34.2 101.2L33.6 104.2L33.1 107.2L33.0 110.1L33.5 113.1L34.5 116.0L35.2 119.0" stroke="#ffe280" stroke-width="2.4" opacity="0.58"/>
<path d="M31.0 72.9L31.5 77.9L31.3 82.8L31.5 87.7L32.6 92.6L33.9 97.5L34.1 102.4L33.3 107.3L33.1 112.2" stroke="#fff6c8" stroke-width="1.7" opacity="0.65"/>
<path d="M13.7 91.3L14.0 93.9L14.7 96.5L15.6 99.1L16.4 101.7L16.7 104.3L16.5 106.9L16.0 109.5L15.4 112.1" stroke="#ffe280" stroke-width="1.5" opacity="0.87"/>
<path d="M14.2 80.9L16.1 85.7L16.5 90.4L15.8 95.2L16.4 99.9L17.9 104.7L18.4 109.5L17.4 114.2L16.9 119.0" stroke="#fffae0" stroke-width="1.5" opacity="0.79"/>
<path d="M33.2 51.2L32.4 55.9L30.0 60.6L29.4 65.3L31.3 70.0L32.8 74.7L31.3 79.4L30.1 84.1L32.1 88.8" stroke="#fff6c8" stroke-width="1.4" opacity="0.57"/>
<path d="M14.8 71.1L13.3 74.8L12.5 78.6L13.9 82.3L16.1 86.1L16.9 89.8L15.7 93.6L14.9 97.3L15.9 101.0" stroke="#fff6c8" stroke-width="1.1" opacity="0.59"/>
<path d="M15.8 59.8L13.8 64.1L11.6 68.5L13.5 72.9L14.5 77.3L12.1 81.7L12.5 86.0L16.2 90.4L16.3 94.8" stroke="#ffe280" stroke-width="1.9" opacity="0.54"/>
<path d="M22.4 90.2L23.0 93.8L24.6 97.4L25.7 101.0L25.1 104.6L23.8 108.2L23.7 111.8L25.1 115.4L26.5 119.0" stroke="#fff6c8" stroke-width="1.3" opacity="0.88"/>
<path d="M32.7 44.9L33.8 49.3L33.2 53.6L31.4 58.0L31.6 62.4L32.9 66.8L32.1 71.2L31.2 75.6L32.8 80.0" stroke="#ffeea8" stroke-width="1.6" opacity="0.83"/>
<path d="M32.4 44.9L31.8 48.3L32.9 51.7L33.7 55.1L32.0 58.5L30.2 61.9L31.0 65.3L33.0 68.7L32.8 72.1" stroke="#fff6c8" stroke-width="1.3" opacity="0.51"/>
<path d="M20.8 45.8L20.9 48.7L21.2 51.6L21.0 54.6L20.0 57.5L18.5 60.4L17.3 63.4L17.2 66.3L17.9 69.2" stroke="#fffff0" stroke-width="2.0" opacity="0.57"/>
<path d="M14.0 73.8L15.3 77.8L15.2 81.7L14.4 85.7L15.1 89.6L17.2 93.6L18.0 97.5L16.6 101.5L16.0 105.4" stroke="#fffae0" stroke-width="1.3" opacity="0.87"/>
<path d="M32.6 89.6L32.9 92.3L32.1 94.9L31.0 97.6L30.8 100.2L31.8 102.9L33.3 105.5L34.2 108.2L33.7 110.8" stroke="#ffeea8" stroke-width="2.3" opacity="0.63"/>
<path d="M22.5 64.7L23.0 68.9L24.0 73.1L23.9 77.3L23.0 81.5L23.2 85.7L25.0 89.9L26.5 94.1L26.4 98.4" stroke="#fff6c8" stroke-width="1.5" opacity="0.72"/>
<path d="M22.7 91.8L23.7 95.2L25.4 98.6L26.0 102.0L25.2 105.4L24.0 108.8L23.9 112.2L25.3 115.6L26.8 119.0" stroke="#ffe280" stroke-width="1.7" opacity="0.84"/>
<path d="M26.2 46.5L26.8 49.6L26.0 52.7L24.1 55.8L22.9 58.9L23.6 62.0L24.7 65.2L24.5 68.3L22.9 71.4" stroke="#fff6c8" stroke-width="1.4" opacity="0.68"/>
<path d="M12.4 85.4L14.5 88.2L16.6 91.1L16.9 93.9L15.5 96.8L14.0 99.6L14.2 102.5L16.2 105.3L18.2 108.2" stroke="#fffff0" stroke-width="1.1" opacity="0.64"/>
<path d="M17.1 47.4L15.5 52.0L14.8 56.7L14.4 61.4L13.3 66.1L12.0 70.7L12.1 75.4L13.0 80.1L13.9 84.7" stroke="#fffff0" stroke-width="1.5" opacity="0.58"/>
<path d="M17.7 87.1L19.9 91.1L19.2 95.1L17.2 99.1L16.6 103.1L18.8 107.1L21.3 111.0L21.3 115.0L18.8 119.0" stroke="#ffe280" stroke-width="2.1" opacity="0.82"/>
</g>
<g filter="url(#bl3)">
<path d="M32.5 24C32.5 15 37.5 10.5 45.5 10.5C53.5 10.5 59 15 59.4 25C59.8 33 58.4 42 54.8 48C52.2 52.5 49 55.4 45.5 55.4C42 55.4 38.4 52.4 36.2 47.6C33.6 41.6 32.5 33 32.5 24Z" fill="#ecbc92"/>
<path d="M54.6 19C57.6 23 59.2 32 58.2 40C57.6 45 56 49 53.4 51.6C55.6 44 56.2 30 54.6 19Z" fill="#d48c58" opacity=".8"/>
<path d="M38 50C41 54.6 47 56.4 52 52.6L52 58C48 60 42 59.4 39.5 56Z" fill="#c8804c" opacity=".7"/>
<ellipse cx="40.6" cy="39.6" rx="4.5" ry="6" fill="#f8d6b4" opacity=".6" filter="url(#bl1)"/>
<ellipse cx="44" cy="19.5" rx="7.4" ry="5" fill="#f6d2ac" opacity=".7" filter="url(#bl1)"/>
<path d="M34 27.4C36 26 39.4 26 41.6 27.2" stroke="#8a5a34" stroke-width="0.9" fill="none"/>
<path d="M50 27.4C52 26.2 55.4 26.2 57.6 27.8" stroke="#8a5a34" stroke-width="0.9" fill="none"/>
<ellipse cx="37.8" cy="30.4" rx="3.1" ry="1.7" fill="#4e3220"/>
<ellipse cx="53.8" cy="30.8" rx="3.1" ry="1.7" fill="#4e3220"/>
<path d="M46 31C46.2 35 45.4 37.6 44.6 39.6C45.8 40.6 48 40.6 49.2 39.6" stroke="#c88458" stroke-width="1" fill="none" opacity=".8"/>
<path d="M40.4 44.4C42.6 43 44 43.4 45.2 43.8C46.4 43.4 48.2 43 50.8 44.6C48.2 47 43 47 40.4 44.4Z" fill="#c46c5a"/>
<path d="M43 2.6C36 3.2 29.6 7.6 27 14C25 19 23.6 26 22.6 34C26.6 27 29.6 18.6 33.6 14C36.6 10.8 40 9.6 43.6 9.8C48 9.2 52.4 10.8 55.4 14.4C58.4 18.4 60.4 26.4 64 34C65 26 63.6 17 60.4 11C57.2 5.6 50 2.4 43 2.6Z" fill="#b06c2c"/>
<path d="M43.4 2.8C39 3 34 5.6 31 9.6C35 7.4 39.6 6.6 43.6 8.4C47.6 6.6 53 7.6 57.4 10.8C54 5.6 48.6 2.6 43.4 2.8Z" fill="#7c4216"/>
<path d="M30 12C28 17 26.4 24 25.6 30" stroke="#e8a850" stroke-width="1.6" fill="none" opacity=".8"/>
<path d="M58.6 14C60.6 19 61.6 25 62.6 30" stroke="#a25c22" stroke-width="1.6" fill="none" opacity=".8"/>
</g>
</symbol>
</defs>
</svg>

<div id="titlebar" class="abs">
  <svg class="abs" style="left:745px;top:0" width="55" height="14" viewBox="0 0 55 14">
    <path d="M6.5 5.7H13.5" stroke="#e8e8ee" stroke-width="1" fill="none"/>
    <rect x="24.6" y="2.6" width="6" height="6" rx="1.2" stroke="#e8e8ee" stroke-width="1" fill="none"/>
    <path d="M42.3 2.3L49.3 9M49.3 2.3L42.3 9" stroke="#e8e8ee" stroke-width="1" fill="none"/>
  </svg>
</div>

<div id="header" class="abs"></div>
<!-- header left -->
<svg class="abs" style="left:8px;top:26px" width="10" height="10" viewBox="0 0 10 10"><path d="M5 0.6L0.4 4.8H1.6V9H4V6.3H6V9H8.4V4.8H9.6Z" fill="#555"/></svg>
<div class="t b" style="left:20.4px;top:28.4px;font-size:7.6px;color:#444">首页</div>
<div class="abs" style="left:44px;top:24px;width:1px;height:14px;background:#f1f1f1"></div>
<div class="abs" style="left:54px;top:20px;width:65px;height:23px;border:1px solid #cfcfcf;border-radius:4px;background:#fff"></div>
<svg class="abs" style="left:64px;top:26px" width="10" height="10" viewBox="0 0 10 10"><path d="M5 7V1.4M2.6 3.6L5 1.2L7.4 3.6M0.8 8.8H9.2" stroke="#444" stroke-width="1.2" fill="none"/></svg>
<div class="t b" style="left:77px;top:28px;font-size:8px;color:#444">重新上传</div>

<!-- header right -->
<div class="abs" style="left:527px;top:20px;width:23px;height:21px;background:#f6f6fa;border-radius:3px"></div>
<svg class="abs" style="left:533px;top:26px" width="11" height="10" viewBox="0 0 11 10"><rect x="1.4" y="1.3" width="8.4" height="7.4" rx="1.3" fill="none" stroke="#7270c8" stroke-width="1"/><path d="M1.6 2.2H9.6" stroke="#7270c8" stroke-width="1"/><path d="M1.8 6H9.4" stroke="#7270c8" stroke-width="0.9"/><path d="M2.9 6.2V8.4M4.7 6.2V8.4M6.5 6.2V8.4M8.3 6.2V8.4" stroke="#7270c8" stroke-width="1.1" opacity=".75"/></svg>
<svg class="abs" style="left:562px;top:26px" width="10" height="10" viewBox="0 0 10 10"><g fill="none" stroke="#8c8c8c" stroke-width="1"><rect x="0.9" y="0.9" width="3.3" height="3.3" rx="1.2"/><rect x="5.2" y="0.9" width="3.3" height="3.3" rx="1.2"/><rect x="0.9" y="5.2" width="3.3" height="3.3" rx="1.2"/><rect x="5.2" y="5.2" width="3.3" height="3.3" rx="1.2"/></g></svg>
<svg class="abs" style="left:619px;top:26px;will-change:transform" width="12" height="12" viewBox="0 0 12 12"><circle cx="6" cy="5.6" r="4.6" fill="none" stroke="#3a3a3a" stroke-width="1.1"/><path d="M1.3 10.2L3 8.6" stroke="#3a3a3a" stroke-width="1.1"/><text x="6" y="8" font-size="6.5" font-family="Liberation Sans, sans-serif" text-anchor="middle" fill="#333">?</text></svg>
<div class="abs" style="left:650px;top:22px;width:61px;height:18px;border-radius:9px;background:linear-gradient(100deg,#fab648 0%,#f69c32 45%,#f0671a 100%)"></div>
<svg class="abs" style="left:659px;top:27px" width="9" height="8" viewBox="0 0 9 8"><path d="M0.6 1.6L2.6 3.6L4.5 0.8L6.4 3.6L8.4 1.6L7.6 6H1.4Z M1.4 6.6H7.6V7.4H1.4Z" fill="#fff"/></svg>
<div class="t" style="left:671px;top:27.5px;font-size:7.8px;color:#fff1dc;opacity:.92">会员购买</div>

<svg class="abs" style="left:727px;top:23px" width="18" height="18" viewBox="0 0 18 18"><circle cx="9" cy="8.6" r="7.9" fill="#f3f3f3"/><circle cx="9" cy="8.6" r="7.6" fill="none" stroke="#ececec" stroke-width="0.6"/><path d="M9 4.6C11.2 5.6 13.2 8 13.2 10.4C13.2 11.8 11.4 12.4 9 12.4S4.8 11.8 4.8 10.4C4.8 8 6.8 5.6 9 4.6Z" fill="#fff"/><path d="M6.9 9.4L7.6 8.7L8.3 9.4M9.7 9.4L10.4 8.7L11.1 9.4" fill="none" stroke="#c8c8c8" stroke-width="0.5"/></svg>
<div class="t" style="left:749px;top:26.4px;font-size:9.6px;color:#2a2a2a;transform:scaleX(.85);transform-origin:0 50%">user695713</div>

<div id="canvas" class="abs"></div>

<svg class="abs" style="left:282px;top:176px" width="89" height="118"><use href="#photo" width="89" height="118"/></svg>
<svg class="abs" style="left:279px;top:173px" width="96" height="124" viewBox="0 0 96 124"><rect x="2.8" y="2.8" width="89.8" height="118.2" fill="none" stroke="#bcbcde" stroke-width="1.6"/></svg>
<div class="hc" style="left:279px;top:173px"></div><div class="hc" style="left:369px;top:173px"></div>
<div class="hc" style="left:279px;top:292px"></div><div class="hc" style="left:369px;top:292px"></div>
<div class="hh" style="left:320.2px;top:173.8px"></div><div class="hh" style="left:320.2px;top:293px"></div>
<div class="hv" style="left:279.8px;top:229px"></div><div class="hv" style="left:369.4px;top:229px"></div>

<div class="abs" style="left:319.7px;top:157px;width:14.2px;height:14.2px;border-radius:50%;background:#fff"></div>
<svg class="abs" style="left:322.7px;top:160.1px" width="8" height="8" viewBox="0 0 8 8"><circle cx="4" cy="4" r="2.8" fill="none" stroke="#333" stroke-width="1.1" stroke-dasharray="7.2 1.6" stroke-dashoffset="1"/><path d="M6.2 0.6L7.4 2.8L5 2.9Z M1.8 7.4L0.6 5.2L3 5.1Z" fill="#333"/></svg>
<div class="abs" style="left:339.1px;top:157px;width:33.8px;height:14.2px;border-radius:7.1px;background:#fff"></div>
<svg class="abs" style="left:344px;top:160px" width="8" height="8" viewBox="0 0 8 8"><path d="M1.2 1.4L6 5.6M6.8 1.4L2 5.6" stroke="#333" stroke-width="1.3" fill="none"/><circle cx="1.7" cy="6.2" r="1.1" fill="#333"/><circle cx="6.3" cy="6.2" r="1.1" fill="#333"/></svg>
<div class="t b" style="left:354px;top:162px;font-size:6.8px;color:#333">编辑</div>

<div class="abs" style="left:319.6px;top:304.3px;width:14px;height:14px;border-radius:50%;background:#fff"></div>
<svg class="abs" style="left:322.6px;top:307.3px" width="8" height="8" viewBox="0 0 8 8"><path d="M4 0.6V7.4" stroke="#333" stroke-width="0.8"/><path d="M0.6 2.6L2.6 4L0.6 5.4Z M7.4 2.6L5.4 4L7.4 5.4Z" fill="none" stroke="#333" stroke-width="0.7" stroke-linejoin="round"/></svg>

<div class="abs" style="left:-4px;top:405px;width:70.4px;height:18.6px;border-radius:4px;background:#fff;box-shadow:0 1px 4px rgba(0,0,0,.10)"></div>
<div class="t" style="left:6.8px;top:411.2px;font-size:6.7px;color:#333">右键移动画布</div>

<svg class="abs" style="left:53px;top:409.6px" width="9" height="9" viewBox="0 0 9 9"><circle cx="4.5" cy="4.5" r="3.8" fill="#c0c0c0"/><path d="M3.1 3.1L5.9 5.9M5.9 3.1L3.1 5.9" stroke="#fff" stroke-width="0.9"/></svg>

<div id="bottom" class="abs"></div>

<svg class="abs" style="left:242.4px;top:436.6px" width="9.4" height="9.4" viewBox="0 0 10 10"><path d="M2.3 5.6C1.2 4.6 2.2 3.5 3.1 4.2L3.4 4.5V2.6C3.4 1.6 4.6 1.6 4.7 2.5C4.8 1.4 6.1 1.4 6.2 2.5C6.4 1.7 7.5 1.8 7.6 2.7C7.9 2.2 8.8 2.4 8.8 3.2V6.1C8.8 8 7.4 9.3 5.6 9.3C4 9.3 3.2 8.6 2.7 7.5Z" fill="none" stroke="#444" stroke-width="1" stroke-linejoin="round"/></svg>
<svg class="abs" style="left:263px;top:437px" width="9" height="9" viewBox="0 0 10 10"><circle cx="4.4" cy="4.4" r="3.4" fill="none" stroke="#444" stroke-width="0.9"/><path d="M7 7L9.2 9.2M2.8 4.4H6" stroke="#444" stroke-width="0.9"/></svg>
<div class="t" style="left:282px;top:437.8px;font-size:7.4px;color:#333">25%</div>
<svg class="abs" style="left:302.8px;top:437px" width="9" height="9" viewBox="0 0 10 10"><circle cx="4.4" cy="4.4" r="3.4" fill="none" stroke="#444" stroke-width="0.9"/><path d="M7 7L9.2 9.2M2.8 4.4H6M4.4 2.8V6" stroke="#444" stroke-width="0.9"/></svg>
<svg class="abs" style="left:324.2px;top:437px" width="9.4" height="9.4" viewBox="0 0 10 10"><rect x="1" y="2" width="8" height="6" rx="1.4" fill="none" stroke="#444" stroke-width="0.9"/><path d="M5 2V8" stroke="#444" stroke-width="0.9"/></svg>
<div class="t" style="left:550px;top:438.4px;font-size:7px;color:#6a6a6a;letter-spacing:0.3px">1 / 1</div>

<svg class="abs" style="left:269px;top:450px" width="40" height="40" viewBox="0 0 40 40"><rect x="2.9" y="2.5" width="32.6" height="32.8" rx="1.8" fill="#fff" stroke="#6e6ebe" stroke-width="1.7"/></svg>
<svg class="abs" style="left:276px;top:453.6px" width="23.8" height="30.6"><use href="#photo" width="23.8" height="30.6"/></svg>
<div class="abs" style="left:12px;top:461px;width:15px;height:15px;border-radius:50%;background:#f7f7f7;box-shadow:0 0 2.5px rgba(0,0,0,.10)"></div>
<svg class="abs" style="left:16px;top:465px" width="7" height="7" viewBox="0 0 7 7"><path d="M4.4 1L2 3.5L4.4 6" fill="none" stroke="#a8a8a8" stroke-width="0.9"/></svg>
<div class="abs" style="left:548px;top:461px;width:15px;height:15px;border-radius:50%;background:#f7f7f7;box-shadow:0 0 2.5px rgba(0,0,0,.10)"></div>
<svg class="abs" style="left:552px;top:465px" width="7" height="7" viewBox="0 0 7 7"><path d="M2.6 1L5 3.5L2.6 6" fill="none" stroke="#a8a8a8" stroke-width="0.9"/></svg>

<div id="panel" class="abs"></div>

<div class="t b" style="left:590px;top:64px;font-size:9px;color:#333">背景尺寸</div>
<div class="abs" style="left:590px;top:81px;width:155px;height:140px;border:1px solid #dcdcdc;border-radius:3px;background:#fff;overflow:hidden;box-shadow:0 0 2px rgba(0,0,0,.08)">
 <div class="abs" style="left:0;top:1px;width:153px;height:138px">
  <div class="abs" style="left:148.8px;top:-1px;width:4.2px;height:43px;background:#dbdbdb;border-radius:1px"></div>
  <svg class="abs" style="left:10px;top:9px" width="12" height="12" viewBox="0 0 12 12"><rect x="0.8" y="0.8" width="10.4" height="10.4" rx="2" fill="none" stroke="#5c5cc0" stroke-width="1"/><path d="M1 8.5C3 5.5 4.5 5.8 6 8C7.5 9.5 9 8 11 7.5" fill="none" stroke="#5c5cc0" stroke-width="1"/><circle cx="8" cy="4" r="1" fill="#5c5cc0"/></svg>
  <div class="t" style="left:25px;top:6px;font-size:8px;color:#6464c8">原图</div>
  <div class="t n" style="left:25px;top:16.6px;color:#6464c8">648 * 862px</div>

  <svg class="abs" style="left:9.2px;top:40.8px" width="12" height="12" viewBox="0 0 12 12"><path d="M3 0.5V9H11.5M0.5 3H9V11.5" fill="none" stroke="#444" stroke-width="1"/></svg>
  <div class="t" style="left:25px;top:44px;font-size:8px;color:#555">自定义</div>

  <svg class="abs" style="left:9.2px;top:72.8px" width="12" height="12" viewBox="0 0 12 12"><path d="M3 0.5V9H11.5M0.5 3H9V11.5M3.5 8.5L8.5 3.5" fill="none" stroke="#444" stroke-width="1"/></svg>
  <div class="t" style="left:25px;top:71px;font-size:8px;color:#555">剪裁到边缘</div>
  <div class="t n" style="left:25px;top:81.4px;color:#adadad">648 * 846px</div>

  <svg class="abs" style="left:10px;top:106px" width="12" height="12" viewBox="0 0 12 12"><path d="M2.6 3.6H9C10 3.6 10.6 4.2 10.8 5.2L11.2 9C11.3 10.2 10.6 10.8 9.6 10.8H2C1 10.8 0.3 10.2 0.4 9L0.8 5.2C1 4.2 1.6 3.6 2.6 3.6Z" fill="none" stroke="#444" stroke-width="1" stroke-linejoin="round"/><path d="M3.6 3.6V3A2.2 2.2 0 0 1 8 3V3.6" fill="none" stroke="#444" stroke-width="1"/><path d="M4.4 6.6C5.2 7.6 6.4 7.6 7.2 6.6" fill="none" stroke="#444" stroke-width="0.8"/></svg>
  <div class="t" style="left:25px;top:103px;font-size:8px;color:#555">电商通用1</div>
  <div class="t n" style="left:25px;top:113.6px;color:#adadad">800 * 800px</div>
  <div class="t" style="left:25px;top:134px;font-size:8px;color:#555">电商通用2</div>
 </div>
</div>

<div class="t b" style="left:590px;top:239px;font-size:9px;color:#333">主体缩放</div>
<div class="abs" style="left:719px;top:236px;width:26px;height:13px;border:1px solid #d4d4d4;border-radius:3px;background:#fff"></div>
<div class="t" style="left:725px;top:239px;font-size:7.5px;color:#666">100</div>
<div class="abs" style="left:590px;top:257px;width:155px;height:2px;background:#f0f0f0;border-radius:1px"></div>
<div class="abs" style="left:590px;top:257px;width:94px;height:2px;background:#5353b8;border-radius:1px"></div>
<div class="abs" style="left:680px;top:254px;width:8px;height:8px;border-radius:50%;background:#fff;border:1px solid #5353b8"></div>

<div class="t b" style="left:590px;top:281px;font-size:9px;color:#333">背景</div>
<div class="abs" style="left:590px;top:299px;width:155px;height:22px;background:linear-gradient(#e9e9fc 0,#e9e9fc 21px,#f6f6fe 21px);border-radius:2px"></div>
<svg class="abs" style="left:640.6px;top:304.4px" width="12" height="12" viewBox="0 0 12 12"><path d="M6.6 0.8C7 3.6 7.8 4.4 10.8 5C7.8 5.6 7 6.4 6.6 9.2C6.2 6.4 5.4 5.6 2.4 5C5.4 4.4 6.2 3.6 6.6 0.8Z" fill="#5252d2"/><circle cx="2.1" cy="8.8" r="1.1" fill="#7a7ae0"/><circle cx="2" cy="1.2" r="0.5" fill="#9a9ae8"/></svg>
<div class="t b" style="left:654px;top:306px;font-size:8px;color:#5252d2"><span style="font-size:8.6px">AI</span>合成背景</div>

<div class="abs" style="left:590px;top:330px;width:73px;height:22px;background:#ebebfb;border-radius:2px"></div>
<svg class="abs" style="left:611.6px;top:335.6px" width="11" height="11" viewBox="0 0 11 11"><path d="M4.9 0.9L8.5 4.5L5.3 7.8C4.9 8.2 4.3 8.2 3.9 7.8L1.5 5.4C1.1 5 1.1 4.5 1.5 4.1Z" fill="none" stroke="#4c4cb8" stroke-width="1" stroke-linejoin="round"/><path d="M2.4 3.6C4 4.2 5.4 5.4 7.4 5.4" fill="none" stroke="#4c4cb8" stroke-width="0.9"/><circle cx="9.2" cy="7.5" r="0.8" fill="#4c4cb8"/><path d="M0.4 9.9H10" stroke="#4c4cb8" stroke-width="1"/></svg>
<div class="t b" style="left:625px;top:338px;font-size:8px;color:#4c4cc4">颜色</div>
<div class="abs" style="left:668px;top:330px;width:77px;height:22px;background:#f5f5f7;border-radius:2px"></div>
<svg class="abs" style="left:691px;top:335.6px" width="10.6" height="10.4" viewBox="0 0 12 12"><rect x="0.8" y="0.8" width="10.4" height="10.4" rx="2" fill="none" stroke="#3c3c3c" stroke-width="1.2"/><path d="M1 8.5C3 5.5 4.5 5.8 6 8C7.5 9.5 9 8 11 7.5" fill="none" stroke="#444" stroke-width="1"/><circle cx="8" cy="4" r="1" fill="#444"/></svg>
<div class="t" style="left:705px;top:338px;font-size:8px;color:#666">图片</div>

<div id="sw">
<i style="left:591px;top:362px;background-color:#fff;background-image:conic-gradient(#d9d9d9 25%,#fff 0 50%,#d9d9d9 0 75%,#fff 0);background-size:6px 6px"></i>
<i style="left:613px;top:362px;background:#fe0000"></i>
<i style="left:635px;top:362px;background:#3f8bdb"></i>
<svg class="abs" style="left:655px;top:358px" width="24" height="24" viewBox="0 0 24 24"><rect x="2.9" y="3.5" width="18" height="18.4" rx="3.4" fill="#fff" stroke="#6060b2" stroke-width="1.5"/></svg>
<i style="left:680px;top:362px;background:#e0e0e6"></i>
<i style="left:702px;top:362px;background:#737b90"></i>
<i style="left:724px;top:362px;background:#c40000"></i>

<i style="left:591px;top:383px;background:#c0272d"></i>
<i style="left:613px;top:383px;background:#ffbdff"></i>
<i style="left:635px;top:383px;background:#f8e0c8"></i>
<i style="left:658px;top:383px;background:#00497c"></i>
<i style="left:680px;top:383px;background:#4a76b0"></i>
<i style="left:702px;top:383px;background:#3a9ad9"></i>
<i style="left:724px;top:383px;background:#5aabf5"></i>

<i style="left:591px;top:404px;background:#00bfef"></i>
<i style="left:613px;top:404px;background:#2d8fb0"></i>
<i style="left:635px;top:404px;background:linear-gradient(#84101c,#c03040)"></i>
<i style="left:658px;top:404px;background:linear-gradient(#e6868e,#f0a4aa)"></i>
<i style="left:680px;top:404px;background:linear-gradient(#4a70b0,#98bce4)"></i>
<i style="left:702px;top:404px;background:linear-gradient(#3a90d8,#b8dcf8)"></i>
<i style="left:724px;top:404px;background:linear-gradient(#6c748c,#c4c8d0)"></i>

<i style="left:591px;top:425px;background:linear-gradient(#e8c8a8,#f8e8d8)"></i>
<i style="left:613px;top:425px;background:conic-gradient(from 0deg,#ffe24a 0deg,#ffb24a 50deg,#ff6464 100deg,#ff70c4 150deg,#b884ff 200deg,#66a4ff 240deg,#62e2f2 280deg,#86f08a 325deg,#ffe24a 360deg)"></i>
</div>

<svg class="abs" style="left:588px;top:470px" width="124" height="26" viewBox="0 0 124 26"><rect x="1.9" y="1.6" width="118.3" height="21" rx="2" fill="#5454f3"/></svg>
<svg class="abs" style="left:627.5px;top:477.5px" width="9" height="9" viewBox="0 0 9 9"><path d="M4.5 0.5V6M2.3 4L4.5 6.2L6.7 4M0.8 8.2H8.2" stroke="#fff" stroke-width="1" fill="none"/></svg>
<div class="t b" style="left:638.5px;top:479px;font-size:8px;color:#fff">保存全部</div>
<svg class="abs" style="left:718px;top:477px" width="11" height="11" viewBox="0 0 11 11"><path d="M3.6 1.3H7.4L9.6 4.6C9.9 5.1 9.9 5.9 9.6 6.4L7.4 9.7H3.6L1.4 6.4C1.1 5.9 1.1 5.1 1.4 4.6Z" fill="none" stroke="#444" stroke-width="0.9" stroke-linejoin="round"/><circle cx="5.5" cy="5.5" r="1.7" fill="none" stroke="#444" stroke-width="0.9"/></svg>
<div class="t" style="left:731px;top:479px;font-size:8px;color:#333">设置</div>

<div id="side" class="abs"></div>

<div class="abs" style="left:755.7px;top:48px;width:2.2px;height:396px;background:#d8d8d8;border-radius:0 0 1px 1px"></div>
<svg class="abs" style="left:764px;top:50px" width="32" height="210" viewBox="0 0 32 210"><circle cx="16" cy="19.1" r="13.9" fill="#f4f4f6"/><circle cx="16" cy="75.3" r="14" fill="#5353ea"/><circle cx="16" cy="130.5" r="13.9" fill="#f4f4f6"/><circle cx="16" cy="186.9" r="13.9" fill="#f4f4f6"/></svg>
<svg class="abs" style="left:773.4px;top:62.6px" width="13" height="13" viewBox="0 0 13 13"><circle cx="5.2" cy="6.5" r="3.5" fill="none" stroke="#3c3c3c" stroke-width="1.1"/><circle cx="5.2" cy="6.5" r="2.2" fill="none" stroke="#bbb" stroke-width="0.6"/><path d="M8.6 3.4A3.8 3.8 0 0 1 8.6 9.6" fill="none" stroke="#999" stroke-width="0.9"/></svg>
<div class="t" style="left:772px;top:90px;font-size:7.5px;color:#555">抠图</div>

<svg class="abs" style="left:773.3px;top:118.8px" width="13" height="13" viewBox="0 0 13 13"><path d="M2.2 6.6L6.6 2.2M2.2 9.4L9.4 2.2M3.6 10.8L10.8 3.6M6.4 10.8L10.8 6.4" stroke="#fff" stroke-width="1.1" opacity=".92"/></svg>
<div class="t" style="left:772.2px;top:146px;font-size:7.5px;color:#5c5cc4">背景</div>

<svg class="abs" style="left:774px;top:175px" width="12" height="12" viewBox="0 0 12 12"><path d="M4.2 1L5.8 2.6L8 1.8L7.6 4.2L9.4 5.8L7 6.4L6.2 8.6L4.6 6.8L2.2 7L3.4 5L2 3L4.4 3.2Z" fill="none" stroke="#3c3c3c" stroke-width="1" stroke-linejoin="round"/><path d="M7.6 7.6L11 11" stroke="#3c3c3c" stroke-width="1.2" stroke-linecap="round"/></svg>
<div class="t" style="left:772px;top:201.7px;font-size:7.5px;color:#555">精修</div>

<svg class="abs" style="left:774px;top:231px;will-change:transform" width="12" height="12" viewBox="0 0 12 12"><rect x="0.8" y="0.8" width="10.4" height="10.4" rx="2.2" fill="#f4f4f6" stroke="#444" stroke-width="1"/><path d="M1 3.6L3.6 1M1 6.2L6.2 1M1 8.8L8.8 1M1.4 11L11 1.4M3.8 11L11 3.8M6.4 11L11 6.4M9 11L11 9" stroke="#555" stroke-width="0.55"/><rect x="2.6" y="3.4" width="6.8" height="5.2" rx="1" fill="#f4f4f6" opacity=".85"/><text x="6" y="8" font-size="5.6" font-weight="bold" font-family="Liberation Sans, sans-serif" text-anchor="middle" fill="#333">AI</text></svg>
<div class="t" style="left:768.2px;top:257.6px;font-size:7.5px;color:#666"><span style="letter-spacing:.5px">AI</span>背景</div>




<svg class="abs" style="left:0;top:0;pointer-events:none" width="800" height="497" viewBox="0 0 800 497"><rect x="763.2" y="108.2" width="33" height="49.6" rx="1" fill="none" stroke="#d5332b" stroke-width="2"/><rect x="655.2" y="354.6" width="24.8" height="28.4" rx="1" fill="none" stroke="#d5332b" stroke-width="2"/><defs><linearGradient id="ag" gradientUnits="userSpaceOnUse" x1="766" y1="178" x2="681" y2="347"><stop offset="0" stop-color="#c0271e" stop-opacity=".35"/><stop offset=".3" stop-color="#c0271e" stop-opacity=".9"/><stop offset="1" stop-color="#c0271e"/></linearGradient></defs><path d="M766.1 177.9L680.7 345.2L683.0 346.4L766.5 178.1Z" fill="url(#ag)"/><path d="M680.7 340L681.4 346.5L687.6 343.8" fill="none" stroke="#c0271e" stroke-width="1.7" stroke-linejoin="miter" stroke-linecap="round"/></svg>

</body>
</html>
